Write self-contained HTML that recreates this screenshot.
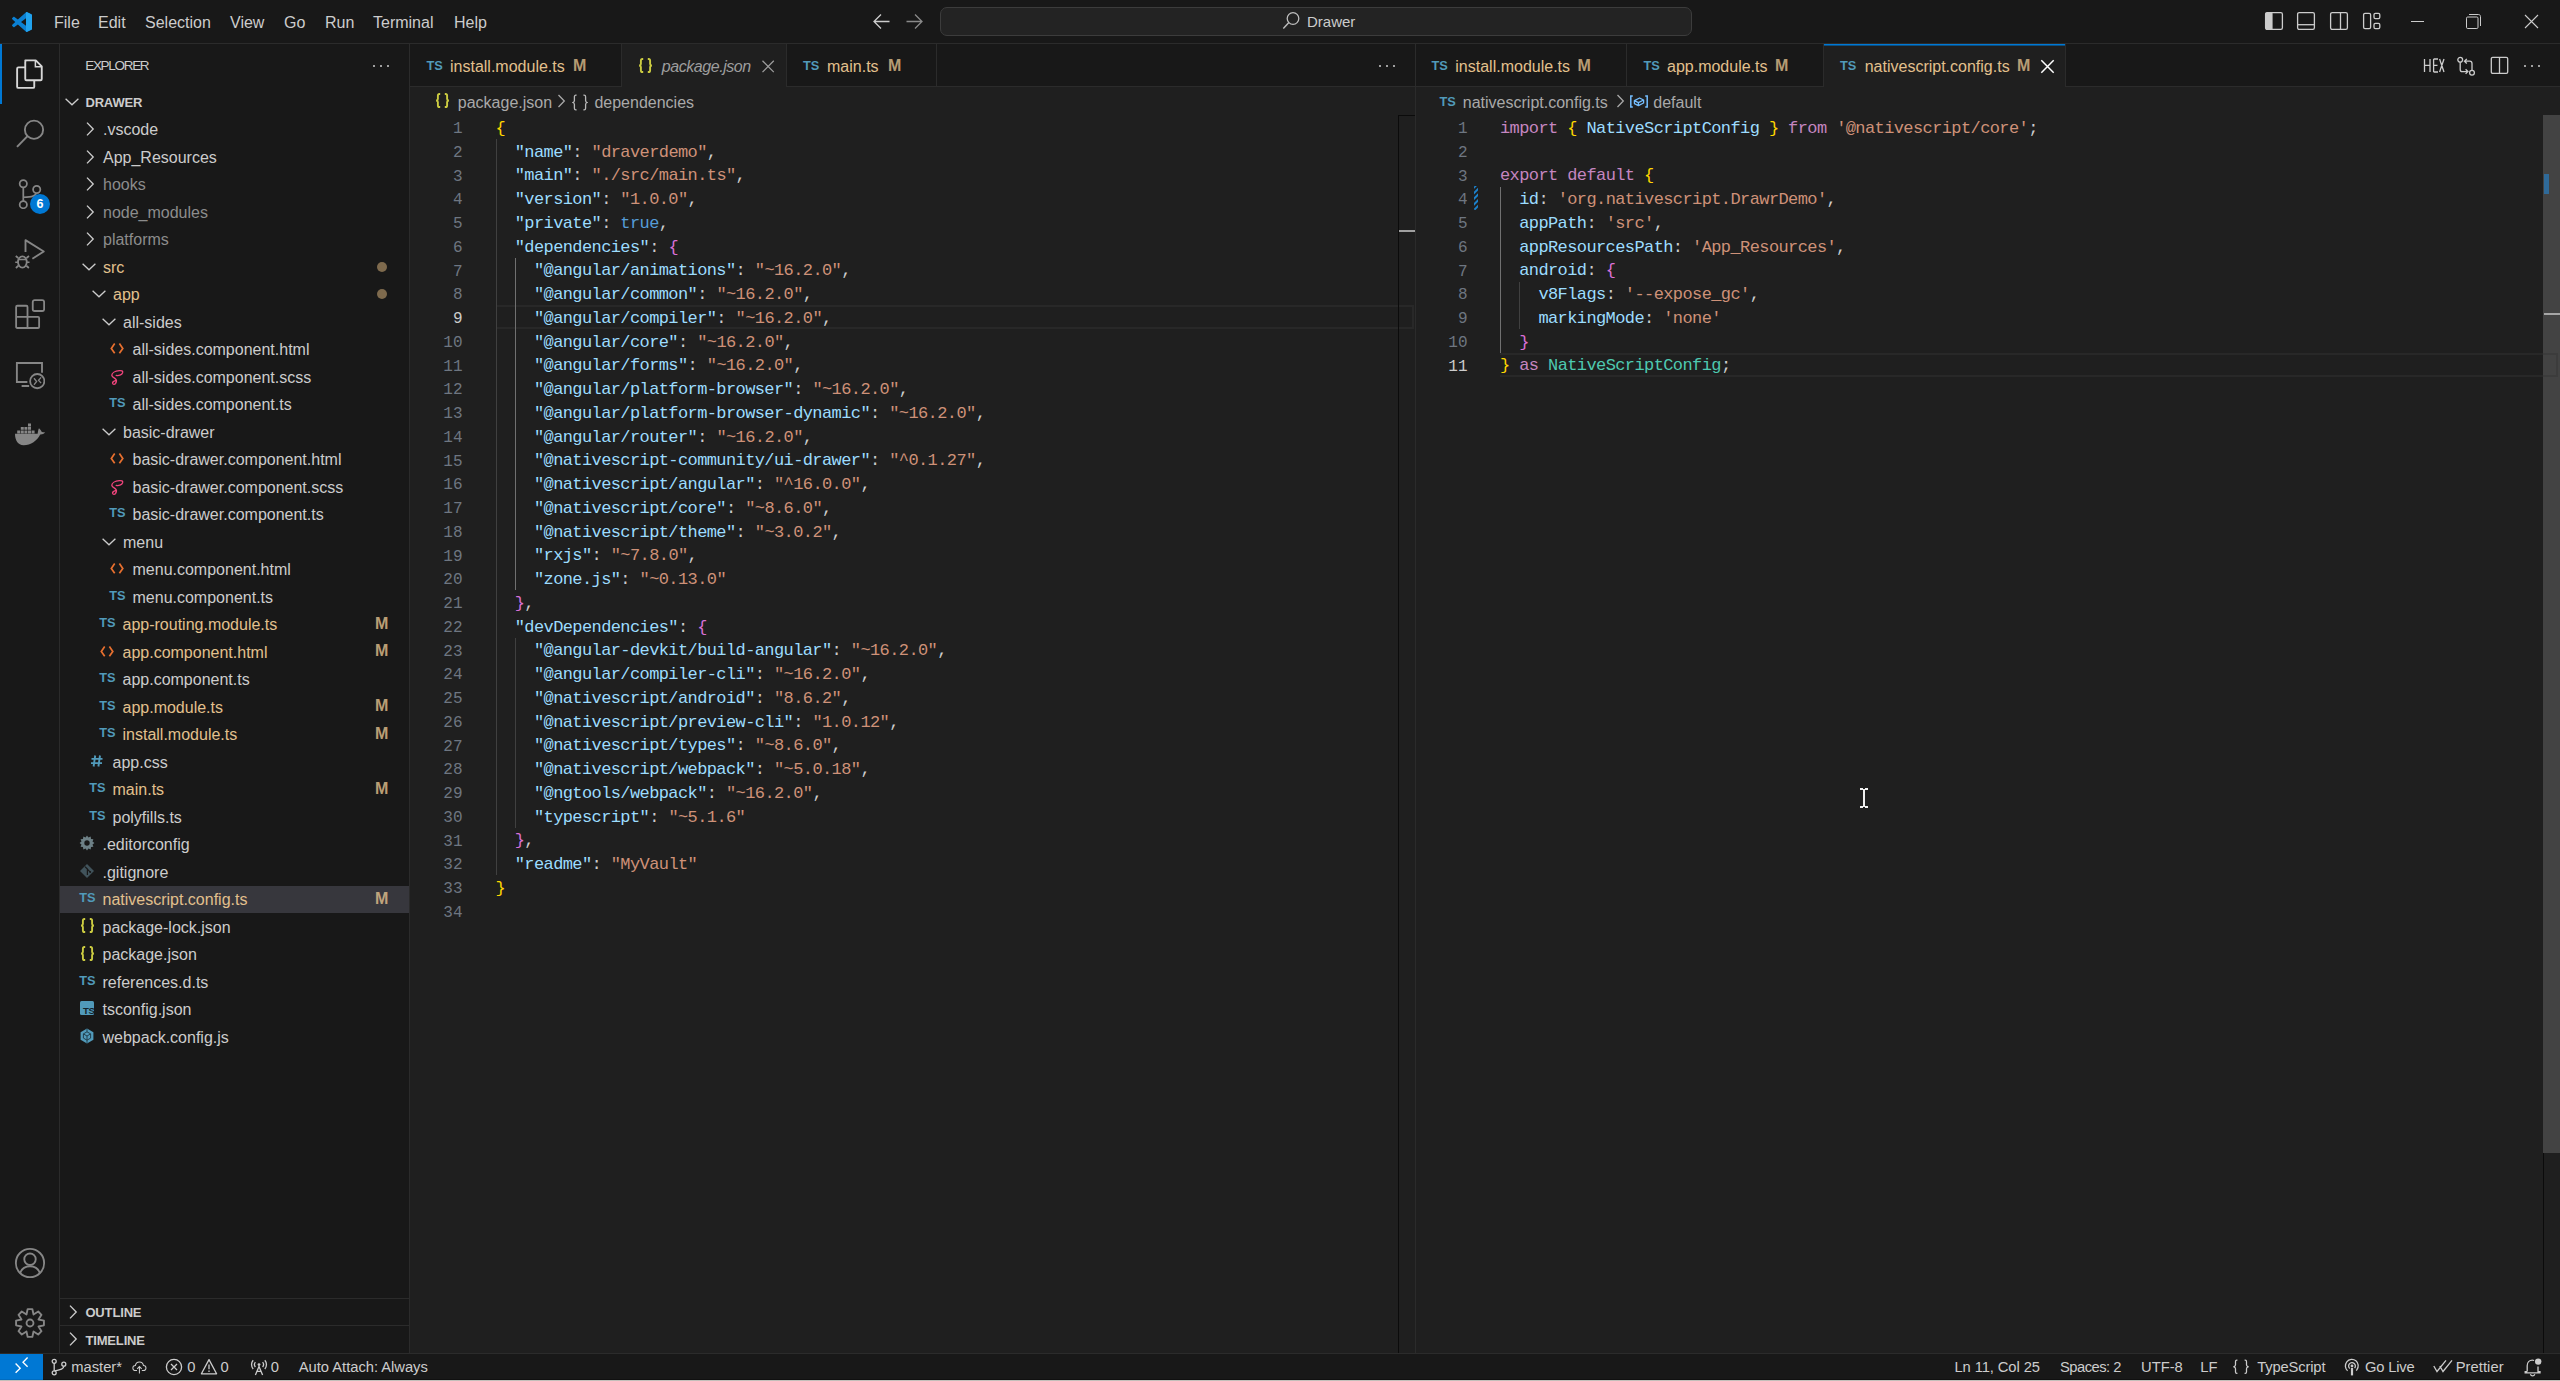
<!DOCTYPE html><html><head><meta charset="utf-8"><title>VS Code</title><style>html,body{margin:0;padding:0;}body{width:2560px;height:1381px;overflow:hidden;position:relative;background:#181818;font-family:"Liberation Sans",sans-serif;}</style></head><body>
<div style="position:absolute;left:0px;top:0px;width:2560px;height:43px;background:#181818;"></div>
<div style="position:absolute;left:0px;top:43px;width:2560px;height:1px;background:#2b2b2b;"></div>
<svg style="position:absolute;left:12px;top:12px;" width="20" height="20" viewBox="0 0 100 100" fill="none"><path d="M96.5 10.8 75.9 0.9c-2.4-1.2-5.2-0.7-7.1 1.2L29.4 38.1 12.2 25.1c-1.6-1.2-3.8-1.1-5.3 0.2L1.4 30.3c-1.8 1.7-1.8 4.5 0 6.2L16.3 50 1.4 63.5c-1.8 1.7-1.8 4.5 0 6.2l5.5 5c1.5 1.4 3.7 1.5 5.3 0.2l17.2-13L68.8 98c1.9 1.9 4.7 2.4 7.1 1.2l20.6-9.9c2.2-1 3.5-3.2 3.5-5.6V16.4c0-2.4-1.4-4.6-3.5-5.6zM75 72.7 45.1 50 75 27.3z" fill="#0b80d3"/><path d="M70 1.5 75.9 0.9 96.5 10.8C98.6 11.8 100 14 100 16.4V83.6C100 86 98.6 88.2 96.5 89.2L75.9 99.1C74 100 72 100 70 99Z" fill="#21a3ee"/></svg>
<div style="position:absolute;left:54px;top:13.52px;font:normal normal 16px/16px 'Liberation Sans', sans-serif;color:#cccccc;white-space:pre;letter-spacing:0px;"><span style="display:inline-block;line-height:normal;vertical-align:baseline">File</span></div>
<div style="position:absolute;left:98px;top:13.52px;font:normal normal 16px/16px 'Liberation Sans', sans-serif;color:#cccccc;white-space:pre;letter-spacing:0px;"><span style="display:inline-block;line-height:normal;vertical-align:baseline">Edit</span></div>
<div style="position:absolute;left:145px;top:13.52px;font:normal normal 16px/16px 'Liberation Sans', sans-serif;color:#cccccc;white-space:pre;letter-spacing:0px;"><span style="display:inline-block;line-height:normal;vertical-align:baseline">Selection</span></div>
<div style="position:absolute;left:230px;top:13.52px;font:normal normal 16px/16px 'Liberation Sans', sans-serif;color:#cccccc;white-space:pre;letter-spacing:0px;"><span style="display:inline-block;line-height:normal;vertical-align:baseline">View</span></div>
<div style="position:absolute;left:284px;top:13.52px;font:normal normal 16px/16px 'Liberation Sans', sans-serif;color:#cccccc;white-space:pre;letter-spacing:0px;"><span style="display:inline-block;line-height:normal;vertical-align:baseline">Go</span></div>
<div style="position:absolute;left:325px;top:13.52px;font:normal normal 16px/16px 'Liberation Sans', sans-serif;color:#cccccc;white-space:pre;letter-spacing:0px;"><span style="display:inline-block;line-height:normal;vertical-align:baseline">Run</span></div>
<div style="position:absolute;left:373px;top:13.52px;font:normal normal 16px/16px 'Liberation Sans', sans-serif;color:#cccccc;white-space:pre;letter-spacing:0px;"><span style="display:inline-block;line-height:normal;vertical-align:baseline">Terminal</span></div>
<div style="position:absolute;left:454px;top:13.52px;font:normal normal 16px/16px 'Liberation Sans', sans-serif;color:#cccccc;white-space:pre;letter-spacing:0px;"><span style="display:inline-block;line-height:normal;vertical-align:baseline">Help</span></div>
<svg style="position:absolute;left:872px;top:13px;" width="19" height="17" viewBox="0 0 19 17" fill="none"><path d="M9 1.5 2 8.5 9 15.5M2 8.5H17.5" stroke="#cccccc" stroke-width="1.3"/></svg>
<svg style="position:absolute;left:905px;top:13px;" width="19" height="17" viewBox="0 0 19 17" fill="none"><path d="M10 1.5 17 8.5 10 15.5M17 8.5H1.5" stroke="#8a8a8a" stroke-width="1.3"/></svg>
<div style="position:absolute;left:940px;top:7px;width:750px;height:27px;border:1.25px solid #3c3c3c;border-radius:7px;background:#232323;"></div>
<svg style="position:absolute;left:1282px;top:11px;" width="19" height="19" viewBox="0 0 19 19" fill="none"><circle cx="11" cy="7.5" r="5.8" stroke="#bdbdbd" stroke-width="1.3"/><path d="M6.9 11.6 1.3 17.4" stroke="#bdbdbd" stroke-width="1.4"/></svg>
<div style="position:absolute;left:1307px;top:13.42px;font:normal normal 15px/15px 'Liberation Sans', sans-serif;color:#cccccc;white-space:pre;letter-spacing:0px;"><span style="display:inline-block;line-height:normal;vertical-align:baseline">Drawer</span></div>
<svg style="position:absolute;left:2264px;top:11px;" width="20" height="20" viewBox="0 0 20 20" fill="none"><rect x="1.6" y="1.6" width="16.8" height="16.8" rx="1.6" stroke="#cccccc" stroke-width="1.3"/><rect x="1.6" y="1.6" width="7" height="16.8" rx="1.2" fill="#cccccc"/></svg>
<svg style="position:absolute;left:2296px;top:11px;" width="20" height="20" viewBox="0 0 20 20" fill="none"><rect x="1.6" y="1.6" width="16.8" height="16.8" rx="1.6" stroke="#cccccc" stroke-width="1.3"/><path d="M1.6 13.7H18.4" stroke="#cccccc" stroke-width="1.3"/></svg>
<svg style="position:absolute;left:2329px;top:11px;" width="20" height="20" viewBox="0 0 20 20" fill="none"><rect x="1.6" y="1.6" width="16.8" height="16.8" rx="1.6" stroke="#cccccc" stroke-width="1.3"/><path d="M11.5 1.6V18.4" stroke="#cccccc" stroke-width="1.3"/></svg>
<svg style="position:absolute;left:2362px;top:11px;" width="20" height="20" viewBox="0 0 20 20" fill="none"><rect x="1.6" y="2.3" width="7" height="15.4" rx="1.4" stroke="#cccccc" stroke-width="1.3"/><rect x="12" y="2.3" width="5.8" height="5.4" rx="1.4" stroke="#cccccc" stroke-width="1.3"/><rect x="12" y="12.3" width="5.8" height="5.4" rx="1.4" stroke="#cccccc" stroke-width="1.3"/></svg>
<div style="position:absolute;left:2411px;top:21px;width:13px;height:1px;background:#cccccc;"></div>
<svg style="position:absolute;left:2465px;top:13px;" width="17" height="17" viewBox="0 0 17 17" fill="none"><rect x="1.5" y="4" width="11.5" height="11.5" rx="1.2" stroke="#cccccc" stroke-width="1"/><path d="M4 1.5H13.5C14.6 1.5 15.5 2.4 15.5 3.5V13" stroke="#cccccc" stroke-width="1"/></svg>
<svg style="position:absolute;left:2523px;top:14px;" width="17" height="16" viewBox="0 0 17 16" fill="none"><path d="M2 1 15 14M15 1 2 14" stroke="#cccccc" stroke-width="1.1"/></svg>
<div style="position:absolute;left:0px;top:44px;width:59px;height:1309px;background:#181818;"></div>
<div style="position:absolute;left:59px;top:44px;width:1px;height:1309px;background:#2b2b2b;"></div>
<div style="position:absolute;left:0px;top:44px;width:2px;height:60px;background:#0078d4;"></div>
<svg style="position:absolute;left:15px;top:59px;" width="30" height="30" viewBox="0 0 24 24" fill="none"><path d="M8.2 1.1H16.6L21.4 5.9V16Q21.4 17 20.4 17H9.2Q8.2 17 8.2 16V2.1Q8.2 1.1 9.2 1.1Z" stroke="#d7d7d7" stroke-width="1.5" stroke-linejoin="round"/><path d="M16.3 1.3V6.2H21.2" stroke="#d7d7d7" stroke-width="1.2"/><path d="M8.2 6.7H2.7Q1.7 6.7 1.7 7.7V22.1Q1.7 23.1 2.7 23.1H14.4Q15.4 23.1 15.4 22.1V17" stroke="#d7d7d7" stroke-width="1.5"/></svg>
<svg style="position:absolute;left:15px;top:119px;" width="30" height="30" viewBox="0 0 24 24" fill="none"><circle cx="15.2" cy="8.6" r="7.3" stroke="#868686" stroke-width="1.5"/><path d="M10 13.7 1.6 22.3" stroke="#868686" stroke-width="1.6"/></svg>
<svg style="position:absolute;left:15px;top:179px;" width="30" height="30" viewBox="0 0 24 24" fill="none"><circle cx="6.64" cy="3.76" r="2.9" stroke="#868686" stroke-width="1.4"/><circle cx="6.64" cy="20.5" r="2.9" stroke="#868686" stroke-width="1.4"/><circle cx="17.36" cy="8.4" r="2.9" stroke="#868686" stroke-width="1.4"/><path d="M6.64 6.66V17.6M17.1 11.3C16.2 13.6 14.2 14.4 6.8 14.6" stroke="#868686" stroke-width="1.4"/></svg>
<div style="position:absolute;left:30px;top:194px;width:20px;height:20px;border-radius:10px;background:#0078d4;color:#fff;font:bold 12.5px/20px 'Liberation Sans',sans-serif;text-align:center;">6</div>
<svg style="position:absolute;left:15px;top:239px;" width="30" height="30" viewBox="0 0 24 24" fill="none"><path d="M8.4 10.4V0.9L23 10 13.9 15.8" stroke="#868686" stroke-width="1.5" stroke-linejoin="round"/><ellipse cx="5.9" cy="18.4" rx="3.5" ry="4.5" stroke="#868686" stroke-width="1.45"/><path d="M2.5 16.4H9.3M2.6 15.2 0.6 13.6M9.2 15.2 11.2 13.6M2.3 18.6H0.2M9.5 18.6H11.6M2.7 21.4 0.7 23.2M9.1 21.4 11.1 23.2" stroke="#868686" stroke-width="1.35"/></svg>
<svg style="position:absolute;left:15px;top:299px;" width="30" height="30" viewBox="0 0 24 24" fill="none"><path d="M0.9 6.3Q0.9 5.4 1.8 5.4H9.1Q10 5.4 10 6.3V14.3H18.4Q19.3 14.3 19.3 15.2V22.3Q19.3 23.2 18.4 23.2H1.8Q0.9 23.2 0.9 22.3Z M0.9 14.3H10V23.2" stroke="#868686" stroke-width="1.45"/><rect x="14.2" y="0.9" width="9.1" height="8.7" rx="1.5" stroke="#868686" stroke-width="1.45"/></svg>
<svg style="position:absolute;left:15px;top:360px;" width="30" height="30" viewBox="0 0 24 24" fill="none"><path d="M21.6 10.2V2.4H1.5V17.6H9.9M5.3 20.8H11.3" stroke="#868686" stroke-width="1.5"/><circle cx="17.8" cy="16.9" r="5.7" stroke="#868686" stroke-width="1.45"/><path d="M15.2 14.6 17.3 17.2 15.2 19.8M20.9 13.9 18.8 16.2 20.9 18.5" stroke="#868686" stroke-width="1.05"/></svg>
<svg style="position:absolute;left:14px;top:420px;" width="32" height="28" viewBox="0 0 32 28" fill="none"><path d="M1 13.8H23.6C24 11.5 24.2 9.4 25 8.2C26.4 9.4 27.4 11 27.8 12L31.2 12.6C29.8 14 27.8 14.6 26.2 14.4C23.4 20.5 16.5 25.3 9.5 25.2C4 25.1 1 20.5 1 13.8Z" fill="#868686"/><path d="M3.2 10.6h3v2.8h-3zM6.8 10.6h3v2.8h-3zM10.4 10.6h3v2.8h-3zM14.0 10.6h3v2.8h-3zM17.6 10.6h3v2.8h-3zM6.8 7.0h3v2.8h-3zM10.4 7.0h3v2.8h-3zM14.0 7.0h3v2.8h-3zM14.0 3.6h3v2.8h-3z" fill="#868686"/></svg>
<svg style="position:absolute;left:14px;top:1247px;" width="32" height="32" viewBox="0 0 24 24" fill="none"><circle cx="12" cy="12" r="10.6" stroke="#868686" stroke-width="1.4"/><circle cx="12" cy="9.2" r="4.3" stroke="#868686" stroke-width="1.4"/><path d="M4.6 19.6 C5.8 16 8.4 14.4 12 14.4 C15.6 14.4 18.2 16 19.4 19.6" stroke="#868686" stroke-width="1.4"/></svg>
<svg style="position:absolute;left:14px;top:1307px;" width="32" height="32" viewBox="0 0 24 24" fill="none"><path d="M10.25 1.55 L13.75 1.55 L14.64 5.63 L18.16 3.37 L20.63 5.84 L18.37 9.36 L22.45 10.25 L22.45 13.75 L18.37 14.64 L20.63 18.16 L18.16 20.63 L14.64 18.37 L13.75 22.45 L10.25 22.45 L9.36 18.37 L5.84 20.63 L3.37 18.16 L5.63 14.64 L1.55 13.75 L1.55 10.25 L5.63 9.36 L3.37 5.84 L5.84 3.37 L9.36 5.63Z" stroke="#868686" stroke-width="1.4" stroke-linejoin="round"/><circle cx="12" cy="12" r="2.6" stroke="#868686" stroke-width="1.4"/></svg>
<div style="position:absolute;left:60px;top:44px;width:349px;height:1309px;background:#181818;"></div>
<div style="position:absolute;left:409px;top:44px;width:1px;height:1309px;background:#2b2b2b;"></div>
<div style="position:absolute;left:85.2px;top:58.18px;font:normal normal 13.5px/13.5px 'Liberation Sans', sans-serif;color:#cccccc;white-space:pre;letter-spacing:-1.3px;"><span style="display:inline-block;line-height:normal;vertical-align:baseline">EXPLORER</span></div>
<div style="position:absolute;left:373.2px;top:64.8px;width:2.3px;height:2.3px;background:#cccccc;border-radius:1.15px"></div>
<div style="position:absolute;left:380px;top:64.8px;width:2.3px;height:2.3px;background:#cccccc;border-radius:1.15px"></div>
<div style="position:absolute;left:386.8px;top:64.8px;width:2.3px;height:2.3px;background:#cccccc;border-radius:1.15px"></div>
<svg style="position:absolute;left:62.400000000000006px;top:91.5px;" width="20" height="20" viewBox="0 0 20 20" fill="none"><path d="M3.6 6.7 10 12.8 16.4 6.7" stroke="#cccccc" stroke-width="1.3"/></svg>
<div style="position:absolute;left:85.4px;top:95.44px;font:normal bold 13px/13px 'Liberation Sans', sans-serif;color:#cccccc;white-space:pre;letter-spacing:-0.15px;"><span style="display:inline-block;line-height:normal;vertical-align:baseline">DRAWER</span></div>
<svg style="position:absolute;left:79.5px;top:119.25px;" width="20" height="20" viewBox="0 0 20 20" fill="none"><path d="M7 3.6 13.2 10 7 16.4" stroke="#cccccc" stroke-width="1.35"/></svg>
<div style="position:absolute;left:103px;top:121.37px;font:normal normal 16px/16px 'Liberation Sans', sans-serif;color:#cccccc;white-space:pre;letter-spacing:0px;"><span style="display:inline-block;line-height:normal;vertical-align:baseline">.vscode</span></div>
<svg style="position:absolute;left:79.5px;top:146.75px;" width="20" height="20" viewBox="0 0 20 20" fill="none"><path d="M7 3.6 13.2 10 7 16.4" stroke="#cccccc" stroke-width="1.35"/></svg>
<div style="position:absolute;left:103px;top:148.87px;font:normal normal 16px/16px 'Liberation Sans', sans-serif;color:#cccccc;white-space:pre;letter-spacing:0px;"><span style="display:inline-block;line-height:normal;vertical-align:baseline">App_Resources</span></div>
<svg style="position:absolute;left:79.5px;top:174.25px;" width="20" height="20" viewBox="0 0 20 20" fill="none"><path d="M7 3.6 13.2 10 7 16.4" stroke="#cccccc" stroke-width="1.35"/></svg>
<div style="position:absolute;left:103px;top:176.37px;font:normal normal 16px/16px 'Liberation Sans', sans-serif;color:#8c8c8c;white-space:pre;letter-spacing:0px;"><span style="display:inline-block;line-height:normal;vertical-align:baseline">hooks</span></div>
<svg style="position:absolute;left:79.5px;top:201.75px;" width="20" height="20" viewBox="0 0 20 20" fill="none"><path d="M7 3.6 13.2 10 7 16.4" stroke="#cccccc" stroke-width="1.35"/></svg>
<div style="position:absolute;left:103px;top:203.87px;font:normal normal 16px/16px 'Liberation Sans', sans-serif;color:#8c8c8c;white-space:pre;letter-spacing:0px;"><span style="display:inline-block;line-height:normal;vertical-align:baseline">node_modules</span></div>
<svg style="position:absolute;left:79.5px;top:229.25px;" width="20" height="20" viewBox="0 0 20 20" fill="none"><path d="M7 3.6 13.2 10 7 16.4" stroke="#cccccc" stroke-width="1.35"/></svg>
<div style="position:absolute;left:103px;top:231.37px;font:normal normal 16px/16px 'Liberation Sans', sans-serif;color:#8c8c8c;white-space:pre;letter-spacing:0px;"><span style="display:inline-block;line-height:normal;vertical-align:baseline">platforms</span></div>
<svg style="position:absolute;left:78.6px;top:256.75px;" width="20" height="20" viewBox="0 0 20 20" fill="none"><path d="M3.6 6.7 10 12.8 16.4 6.7" stroke="#cccccc" stroke-width="1.3"/></svg>
<div style="position:absolute;left:103px;top:258.87px;font:normal normal 16px/16px 'Liberation Sans', sans-serif;color:#e2c08d;white-space:pre;letter-spacing:0px;"><span style="display:inline-block;line-height:normal;vertical-align:baseline">src</span></div>
<div style="position:absolute;left:377px;top:261.75px;width:10px;height:10px;background:#7e6a4d;border-radius:5px"></div>
<svg style="position:absolute;left:88.6px;top:284.25px;" width="20" height="20" viewBox="0 0 20 20" fill="none"><path d="M3.6 6.7 10 12.8 16.4 6.7" stroke="#cccccc" stroke-width="1.3"/></svg>
<div style="position:absolute;left:113px;top:286.37px;font:normal normal 16px/16px 'Liberation Sans', sans-serif;color:#e2c08d;white-space:pre;letter-spacing:0px;"><span style="display:inline-block;line-height:normal;vertical-align:baseline">app</span></div>
<div style="position:absolute;left:377px;top:289.25px;width:10px;height:10px;background:#7e6a4d;border-radius:5px"></div>
<svg style="position:absolute;left:98.6px;top:311.75px;" width="20" height="20" viewBox="0 0 20 20" fill="none"><path d="M3.6 6.7 10 12.8 16.4 6.7" stroke="#cccccc" stroke-width="1.3"/></svg>
<div style="position:absolute;left:123px;top:313.87px;font:normal normal 16px/16px 'Liberation Sans', sans-serif;color:#cccccc;white-space:pre;letter-spacing:0px;"><span style="display:inline-block;line-height:normal;vertical-align:baseline">all-sides</span></div>
<svg style="position:absolute;left:109px;top:341.25px;" width="16" height="16" viewBox="0 0 16 16" fill="none"><path d="M5.7 2.6 2.3 7.4 5.7 12.2M10.4 2.6 13.8 7.4 10.4 12.2" stroke="#e8702f" stroke-width="1.7"/></svg>
<div style="position:absolute;left:132.5px;top:341.37px;font:normal normal 16px/16px 'Liberation Sans', sans-serif;color:#cccccc;white-space:pre;letter-spacing:0px;"><span style="display:inline-block;line-height:normal;vertical-align:baseline">all-sides.component.html</span></div>
<svg style="position:absolute;left:109px;top:368.75px;" width="16" height="16" viewBox="0 0 16 16" fill="none"><path d="M7.2 6.4C9.5 7 12.8 6 13.6 3.8C14.2 2 12.5 1.4 10.4 1.6C6 2 2.8 4 2.8 6.2C2.8 8 5.5 9 6.6 9.9C7.8 11 7.4 13 6.6 14.4C5.8 15.6 3.9 15.6 3.6 14.4C3.3 13 4.8 12 7 11.4" stroke="#f0457c" stroke-width="1.35" stroke-linecap="round"/></svg>
<div style="position:absolute;left:132.5px;top:368.87px;font:normal normal 16px/16px 'Liberation Sans', sans-serif;color:#cccccc;white-space:pre;letter-spacing:0px;"><span style="display:inline-block;line-height:normal;vertical-align:baseline">all-sides.component.scss</span></div>
<div style="position:absolute;left:109.2px;top:395.17px;font:normal bold 12.8px/12.8px 'Liberation Sans', sans-serif;color:#519aba;white-space:pre;letter-spacing:-0.1px;"><span style="display:inline-block;line-height:normal;vertical-align:baseline">TS</span></div>
<div style="position:absolute;left:132.5px;top:396.37px;font:normal normal 16px/16px 'Liberation Sans', sans-serif;color:#cccccc;white-space:pre;letter-spacing:0px;"><span style="display:inline-block;line-height:normal;vertical-align:baseline">all-sides.component.ts</span></div>
<svg style="position:absolute;left:98.6px;top:421.75px;" width="20" height="20" viewBox="0 0 20 20" fill="none"><path d="M3.6 6.7 10 12.8 16.4 6.7" stroke="#cccccc" stroke-width="1.3"/></svg>
<div style="position:absolute;left:123px;top:423.87px;font:normal normal 16px/16px 'Liberation Sans', sans-serif;color:#cccccc;white-space:pre;letter-spacing:0px;"><span style="display:inline-block;line-height:normal;vertical-align:baseline">basic-drawer</span></div>
<svg style="position:absolute;left:109px;top:451.25px;" width="16" height="16" viewBox="0 0 16 16" fill="none"><path d="M5.7 2.6 2.3 7.4 5.7 12.2M10.4 2.6 13.8 7.4 10.4 12.2" stroke="#e8702f" stroke-width="1.7"/></svg>
<div style="position:absolute;left:132.5px;top:451.37px;font:normal normal 16px/16px 'Liberation Sans', sans-serif;color:#cccccc;white-space:pre;letter-spacing:0px;"><span style="display:inline-block;line-height:normal;vertical-align:baseline">basic-drawer.component.html</span></div>
<svg style="position:absolute;left:109px;top:478.75px;" width="16" height="16" viewBox="0 0 16 16" fill="none"><path d="M7.2 6.4C9.5 7 12.8 6 13.6 3.8C14.2 2 12.5 1.4 10.4 1.6C6 2 2.8 4 2.8 6.2C2.8 8 5.5 9 6.6 9.9C7.8 11 7.4 13 6.6 14.4C5.8 15.6 3.9 15.6 3.6 14.4C3.3 13 4.8 12 7 11.4" stroke="#f0457c" stroke-width="1.35" stroke-linecap="round"/></svg>
<div style="position:absolute;left:132.5px;top:478.87px;font:normal normal 16px/16px 'Liberation Sans', sans-serif;color:#cccccc;white-space:pre;letter-spacing:0px;"><span style="display:inline-block;line-height:normal;vertical-align:baseline">basic-drawer.component.scss</span></div>
<div style="position:absolute;left:109.2px;top:505.17px;font:normal bold 12.8px/12.8px 'Liberation Sans', sans-serif;color:#519aba;white-space:pre;letter-spacing:-0.1px;"><span style="display:inline-block;line-height:normal;vertical-align:baseline">TS</span></div>
<div style="position:absolute;left:132.5px;top:506.37px;font:normal normal 16px/16px 'Liberation Sans', sans-serif;color:#cccccc;white-space:pre;letter-spacing:0px;"><span style="display:inline-block;line-height:normal;vertical-align:baseline">basic-drawer.component.ts</span></div>
<svg style="position:absolute;left:98.6px;top:531.75px;" width="20" height="20" viewBox="0 0 20 20" fill="none"><path d="M3.6 6.7 10 12.8 16.4 6.7" stroke="#cccccc" stroke-width="1.3"/></svg>
<div style="position:absolute;left:123px;top:533.87px;font:normal normal 16px/16px 'Liberation Sans', sans-serif;color:#cccccc;white-space:pre;letter-spacing:0px;"><span style="display:inline-block;line-height:normal;vertical-align:baseline">menu</span></div>
<svg style="position:absolute;left:109px;top:561.25px;" width="16" height="16" viewBox="0 0 16 16" fill="none"><path d="M5.7 2.6 2.3 7.4 5.7 12.2M10.4 2.6 13.8 7.4 10.4 12.2" stroke="#e8702f" stroke-width="1.7"/></svg>
<div style="position:absolute;left:132.5px;top:561.37px;font:normal normal 16px/16px 'Liberation Sans', sans-serif;color:#cccccc;white-space:pre;letter-spacing:0px;"><span style="display:inline-block;line-height:normal;vertical-align:baseline">menu.component.html</span></div>
<div style="position:absolute;left:109.2px;top:587.67px;font:normal bold 12.8px/12.8px 'Liberation Sans', sans-serif;color:#519aba;white-space:pre;letter-spacing:-0.1px;"><span style="display:inline-block;line-height:normal;vertical-align:baseline">TS</span></div>
<div style="position:absolute;left:132.5px;top:588.87px;font:normal normal 16px/16px 'Liberation Sans', sans-serif;color:#cccccc;white-space:pre;letter-spacing:0px;"><span style="display:inline-block;line-height:normal;vertical-align:baseline">menu.component.ts</span></div>
<div style="position:absolute;left:99.2px;top:615.17px;font:normal bold 12.8px/12.8px 'Liberation Sans', sans-serif;color:#519aba;white-space:pre;letter-spacing:-0.1px;"><span style="display:inline-block;line-height:normal;vertical-align:baseline">TS</span></div>
<div style="position:absolute;left:122.5px;top:616.37px;font:normal normal 16px/16px 'Liberation Sans', sans-serif;color:#e2c08d;white-space:pre;letter-spacing:0px;"><span style="display:inline-block;line-height:normal;vertical-align:baseline">app-routing.module.ts</span></div>
<div style="position:absolute;left:375px;top:614.67px;font:normal bold 16px/16px 'Liberation Sans', sans-serif;color:#e2c08d;white-space:pre;letter-spacing:0px;opacity:0.8"><span style="display:inline-block;line-height:normal;vertical-align:baseline">M</span></div>
<svg style="position:absolute;left:99px;top:643.75px;" width="16" height="16" viewBox="0 0 16 16" fill="none"><path d="M5.7 2.6 2.3 7.4 5.7 12.2M10.4 2.6 13.8 7.4 10.4 12.2" stroke="#e8702f" stroke-width="1.7"/></svg>
<div style="position:absolute;left:122.5px;top:643.87px;font:normal normal 16px/16px 'Liberation Sans', sans-serif;color:#e2c08d;white-space:pre;letter-spacing:0px;"><span style="display:inline-block;line-height:normal;vertical-align:baseline">app.component.html</span></div>
<div style="position:absolute;left:375px;top:642.17px;font:normal bold 16px/16px 'Liberation Sans', sans-serif;color:#e2c08d;white-space:pre;letter-spacing:0px;opacity:0.8"><span style="display:inline-block;line-height:normal;vertical-align:baseline">M</span></div>
<div style="position:absolute;left:99.2px;top:670.17px;font:normal bold 12.8px/12.8px 'Liberation Sans', sans-serif;color:#519aba;white-space:pre;letter-spacing:-0.1px;"><span style="display:inline-block;line-height:normal;vertical-align:baseline">TS</span></div>
<div style="position:absolute;left:122.5px;top:671.37px;font:normal normal 16px/16px 'Liberation Sans', sans-serif;color:#cccccc;white-space:pre;letter-spacing:0px;"><span style="display:inline-block;line-height:normal;vertical-align:baseline">app.component.ts</span></div>
<div style="position:absolute;left:99.2px;top:697.67px;font:normal bold 12.8px/12.8px 'Liberation Sans', sans-serif;color:#519aba;white-space:pre;letter-spacing:-0.1px;"><span style="display:inline-block;line-height:normal;vertical-align:baseline">TS</span></div>
<div style="position:absolute;left:122.5px;top:698.87px;font:normal normal 16px/16px 'Liberation Sans', sans-serif;color:#e2c08d;white-space:pre;letter-spacing:0px;"><span style="display:inline-block;line-height:normal;vertical-align:baseline">app.module.ts</span></div>
<div style="position:absolute;left:375px;top:697.17px;font:normal bold 16px/16px 'Liberation Sans', sans-serif;color:#e2c08d;white-space:pre;letter-spacing:0px;opacity:0.8"><span style="display:inline-block;line-height:normal;vertical-align:baseline">M</span></div>
<div style="position:absolute;left:99.2px;top:725.17px;font:normal bold 12.8px/12.8px 'Liberation Sans', sans-serif;color:#519aba;white-space:pre;letter-spacing:-0.1px;"><span style="display:inline-block;line-height:normal;vertical-align:baseline">TS</span></div>
<div style="position:absolute;left:122.5px;top:726.37px;font:normal normal 16px/16px 'Liberation Sans', sans-serif;color:#e2c08d;white-space:pre;letter-spacing:0px;"><span style="display:inline-block;line-height:normal;vertical-align:baseline">install.module.ts</span></div>
<div style="position:absolute;left:375px;top:724.67px;font:normal bold 16px/16px 'Liberation Sans', sans-serif;color:#e2c08d;white-space:pre;letter-spacing:0px;opacity:0.8"><span style="display:inline-block;line-height:normal;vertical-align:baseline">M</span></div>
<svg style="position:absolute;left:90px;top:753.75px;" width="14" height="14" viewBox="0 0 14 14" fill="none"><path d="M5.2 1.5 3.6 12.5M10 1.5 8.4 12.5M1.5 4.9H12.5M1 9.1H12" stroke="#519aba" stroke-width="1.9"/></svg>
<div style="position:absolute;left:112.5px;top:753.87px;font:normal normal 16px/16px 'Liberation Sans', sans-serif;color:#cccccc;white-space:pre;letter-spacing:0px;"><span style="display:inline-block;line-height:normal;vertical-align:baseline">app.css</span></div>
<div style="position:absolute;left:89.2px;top:780.17px;font:normal bold 12.8px/12.8px 'Liberation Sans', sans-serif;color:#519aba;white-space:pre;letter-spacing:-0.1px;"><span style="display:inline-block;line-height:normal;vertical-align:baseline">TS</span></div>
<div style="position:absolute;left:112.5px;top:781.37px;font:normal normal 16px/16px 'Liberation Sans', sans-serif;color:#e2c08d;white-space:pre;letter-spacing:0px;"><span style="display:inline-block;line-height:normal;vertical-align:baseline">main.ts</span></div>
<div style="position:absolute;left:375px;top:779.67px;font:normal bold 16px/16px 'Liberation Sans', sans-serif;color:#e2c08d;white-space:pre;letter-spacing:0px;opacity:0.8"><span style="display:inline-block;line-height:normal;vertical-align:baseline">M</span></div>
<div style="position:absolute;left:89.2px;top:807.67px;font:normal bold 12.8px/12.8px 'Liberation Sans', sans-serif;color:#519aba;white-space:pre;letter-spacing:-0.1px;"><span style="display:inline-block;line-height:normal;vertical-align:baseline">TS</span></div>
<div style="position:absolute;left:112.5px;top:808.87px;font:normal normal 16px/16px 'Liberation Sans', sans-serif;color:#cccccc;white-space:pre;letter-spacing:0px;"><span style="display:inline-block;line-height:normal;vertical-align:baseline">polyfills.ts</span></div>
<svg style="position:absolute;left:79px;top:834.95px;" width="16" height="16" viewBox="0 0 16 16" fill="none"><path d="M8 0.6 9.4 2.5 11.7 1.6 12 4 14.4 4.3 13.5 6.6 15.4 8 13.5 9.4 14.4 11.7 12 12 11.7 14.4 9.4 13.5 8 15.4 6.6 13.5 4.3 14.4 4 12 1.6 11.7 2.5 9.4 0.6 8 2.5 6.6 1.6 4.3 4 4 4.3 1.6 6.6 2.5Z" fill="#6d8086"/><circle cx="8" cy="8" r="2.7" fill="#181818"/></svg>
<div style="position:absolute;left:102.5px;top:836.37px;font:normal normal 16px/16px 'Liberation Sans', sans-serif;color:#cccccc;white-space:pre;letter-spacing:0px;"><span style="display:inline-block;line-height:normal;vertical-align:baseline">.editorconfig</span></div>
<svg style="position:absolute;left:79px;top:862.75px;" width="16" height="16" viewBox="0 0 16 16" fill="none"><path d="M8 1 15 8 8 15 1 8Z" fill="#41535b"/><path d="M6 3.6 8.4 6V12M8.6 6.4 11 8.8" stroke="#181818" stroke-width="1.2"/><circle cx="11.2" cy="9" r="1" fill="#181818"/></svg>
<div style="position:absolute;left:102.5px;top:863.87px;font:normal normal 16px/16px 'Liberation Sans', sans-serif;color:#cccccc;white-space:pre;letter-spacing:0px;"><span style="display:inline-block;line-height:normal;vertical-align:baseline">.gitignore</span></div>
<div style="position:absolute;left:60px;top:885.5px;width:349px;height:27.5px;background:#37373d;"></div>
<div style="position:absolute;left:79.2px;top:890.17px;font:normal bold 12.8px/12.8px 'Liberation Sans', sans-serif;color:#519aba;white-space:pre;letter-spacing:-0.1px;"><span style="display:inline-block;line-height:normal;vertical-align:baseline">TS</span></div>
<div style="position:absolute;left:102.5px;top:891.37px;font:normal normal 16px/16px 'Liberation Sans', sans-serif;color:#e2c08d;white-space:pre;letter-spacing:0px;"><span style="display:inline-block;line-height:normal;vertical-align:baseline">nativescript.config.ts</span></div>
<div style="position:absolute;left:375px;top:889.67px;font:normal bold 16px/16px 'Liberation Sans', sans-serif;color:#e2c08d;white-space:pre;letter-spacing:0px;opacity:0.8"><span style="display:inline-block;line-height:normal;vertical-align:baseline">M</span></div>
<svg style="position:absolute;left:79.5px;top:918.25px;" width="15" height="15" viewBox="0 0 15 15" fill="none"><path d="M5.2 1H4.4C3.4 1 2.9 1.6 2.9 2.6V5.9C2.9 6.8 2.4 7.3 1.2 7.5 2.4 7.7 2.9 8.2 2.9 9.1V12.4C2.9 13.4 3.4 14 4.4 14H5.2M9.8 1H10.6C11.6 1 12.1 1.6 12.1 2.6V5.9C12.1 6.8 12.6 7.3 13.8 7.5 12.6 7.7 12.1 8.2 12.1 9.1V12.4C12.1 13.4 11.6 14 10.6 14H9.8" stroke="#cbcb41" stroke-width="1.9"/></svg>
<div style="position:absolute;left:102.5px;top:918.87px;font:normal normal 16px/16px 'Liberation Sans', sans-serif;color:#cccccc;white-space:pre;letter-spacing:0px;"><span style="display:inline-block;line-height:normal;vertical-align:baseline">package-lock.json</span></div>
<svg style="position:absolute;left:79.5px;top:945.75px;" width="15" height="15" viewBox="0 0 15 15" fill="none"><path d="M5.2 1H4.4C3.4 1 2.9 1.6 2.9 2.6V5.9C2.9 6.8 2.4 7.3 1.2 7.5 2.4 7.7 2.9 8.2 2.9 9.1V12.4C2.9 13.4 3.4 14 4.4 14H5.2M9.8 1H10.6C11.6 1 12.1 1.6 12.1 2.6V5.9C12.1 6.8 12.6 7.3 13.8 7.5 12.6 7.7 12.1 8.2 12.1 9.1V12.4C12.1 13.4 11.6 14 10.6 14H9.8" stroke="#cbcb41" stroke-width="1.9"/></svg>
<div style="position:absolute;left:102.5px;top:946.37px;font:normal normal 16px/16px 'Liberation Sans', sans-serif;color:#cccccc;white-space:pre;letter-spacing:0px;"><span style="display:inline-block;line-height:normal;vertical-align:baseline">package.json</span></div>
<div style="position:absolute;left:79.2px;top:972.67px;font:normal bold 12.8px/12.8px 'Liberation Sans', sans-serif;color:#519aba;white-space:pre;letter-spacing:-0.1px;"><span style="display:inline-block;line-height:normal;vertical-align:baseline">TS</span></div>
<div style="position:absolute;left:102.5px;top:973.87px;font:normal normal 16px/16px 'Liberation Sans', sans-serif;color:#cccccc;white-space:pre;letter-spacing:0px;"><span style="display:inline-block;line-height:normal;vertical-align:baseline">references.d.ts</span></div>
<div style="position:absolute;left:80px;top:1000.5px;width:14px;height:14px;background:#519aba;border-radius:1.5px"></div>
<div style="position:absolute;left:83px;top:1005.46px;font:normal bold 9.6px/9.6px 'Liberation Sans', sans-serif;color:#14232b;white-space:pre;letter-spacing:-0.3px;"><span style="display:inline-block;line-height:normal;vertical-align:baseline">TS</span></div>
<div style="position:absolute;left:102.5px;top:1001.37px;font:normal normal 16px/16px 'Liberation Sans', sans-serif;color:#cccccc;white-space:pre;letter-spacing:0px;"><span style="display:inline-block;line-height:normal;vertical-align:baseline">tsconfig.json</span></div>
<svg style="position:absolute;left:79px;top:1027.55px;" width="16" height="16" viewBox="0 0 16 16" fill="none"><path d="M8 0.6 14.4 4.3V11.7L8 15.4 1.6 11.7V4.3Z" fill="#519aba"/><path d="M8 3.8 11.6 5.9V10.1L8 12.2 4.4 10.1V5.9Z M4.4 5.9 8 8 11.6 5.9 M8 8V12.2 M8 0.6V3.8 M8 12.2V15.4" stroke="#1d3642" stroke-width="0.9" fill="none"/></svg>
<div style="position:absolute;left:102.5px;top:1028.87px;font:normal normal 16px/16px 'Liberation Sans', sans-serif;color:#cccccc;white-space:pre;letter-spacing:0px;"><span style="display:inline-block;line-height:normal;vertical-align:baseline">webpack.config.js</span></div>
<div style="position:absolute;left:60px;top:1298px;width:349px;height:1px;background:#2b2b2b;"></div>
<div style="position:absolute;left:60px;top:1325px;width:349px;height:1px;background:#2b2b2b;"></div>
<svg style="position:absolute;left:63px;top:1301.5px;" width="20" height="20" viewBox="0 0 20 20" fill="none"><path d="M7 3.6 13.2 10 7 16.4" stroke="#cccccc" stroke-width="1.35"/></svg>
<div style="position:absolute;left:85.4px;top:1305.03px;font:normal bold 13px/13px 'Liberation Sans', sans-serif;color:#cccccc;white-space:pre;letter-spacing:-0.15px;"><span style="display:inline-block;line-height:normal;vertical-align:baseline">OUTLINE</span></div>
<svg style="position:absolute;left:63px;top:1329px;" width="20" height="20" viewBox="0 0 20 20" fill="none"><path d="M7 3.6 13.2 10 7 16.4" stroke="#cccccc" stroke-width="1.35"/></svg>
<div style="position:absolute;left:85.4px;top:1332.73px;font:normal bold 13px/13px 'Liberation Sans', sans-serif;color:#cccccc;white-space:pre;letter-spacing:-0.15px;"><span style="display:inline-block;line-height:normal;vertical-align:baseline">TIMELINE</span></div>
<div style="position:absolute;left:410px;top:44px;width:1005px;height:1309px;background:#1f1f1f;"></div>
<div style="position:absolute;left:410px;top:44px;width:1005px;height:43px;background:#181818;"></div>
<div style="position:absolute;left:410px;top:86px;width:1005px;height:1px;background:#2b2b2b;"></div>
<div style="position:absolute;left:1416px;top:44px;width:1144px;height:1309px;background:#1f1f1f;"></div>
<div style="position:absolute;left:1416px;top:44px;width:1144px;height:43px;background:#181818;"></div>
<div style="position:absolute;left:1416px;top:86px;width:1144px;height:1px;background:#2b2b2b;"></div>
<div style="position:absolute;left:1415px;top:44px;width:1px;height:1309px;background:#2b2b2b;"></div>
<div style="position:absolute;left:621px;top:44px;width:1px;height:43px;background:#2b2b2b;"></div>
<div style="position:absolute;left:426.5px;top:58.42px;font:normal bold 12.8px/12.8px 'Liberation Sans', sans-serif;color:#519aba;white-space:pre;letter-spacing:-0.1px;"><span style="display:inline-block;line-height:normal;vertical-align:baseline">TS</span></div>
<div style="position:absolute;left:450px;top:57.52px;font:normal normal 16px/16px 'Liberation Sans', sans-serif;color:#e2c08d;white-space:pre;letter-spacing:0px;"><span style="display:inline-block;line-height:normal;vertical-align:baseline">install.module.ts</span></div>
<div style="position:absolute;left:573px;top:56.52px;font:normal bold 16px/16px 'Liberation Sans', sans-serif;color:#e2c08d;white-space:pre;letter-spacing:0px;opacity:0.78"><span style="display:inline-block;line-height:normal;vertical-align:baseline">M</span></div>
<div style="position:absolute;left:622px;top:44px;width:165px;height:43px;background:#1f1f1f;"></div>
<div style="position:absolute;left:786px;top:44px;width:1px;height:43px;background:#2b2b2b;"></div>
<svg style="position:absolute;left:637.5px;top:57.5px;" width="15" height="15" viewBox="0 0 15 15" fill="none"><path d="M5.2 1H4.4C3.4 1 2.9 1.6 2.9 2.6V5.9C2.9 6.8 2.4 7.3 1.2 7.5 2.4 7.7 2.9 8.2 2.9 9.1V12.4C2.9 13.4 3.4 14 4.4 14H5.2M9.8 1H10.6C11.6 1 12.1 1.6 12.1 2.6V5.9C12.1 6.8 12.6 7.3 13.8 7.5 12.6 7.7 12.1 8.2 12.1 9.1V12.4C12.1 13.4 11.6 14 10.6 14H9.8" stroke="#cbcb41" stroke-width="1.9"/></svg>
<div style="position:absolute;left:661.8px;top:57.52px;font:italic normal 16px/16px 'Liberation Sans', sans-serif;color:#9d9d9d;white-space:pre;letter-spacing:-0.45px;"><span style="display:inline-block;line-height:normal;vertical-align:baseline">package.json</span></div>
<svg style="position:absolute;left:760px;top:58px;" width="16" height="16" viewBox="0 0 16 16" fill="none"><path d="M2.5 2.8 13.8 14.1M13.8 2.8 2.5 14.1" stroke="#9d9d9d" stroke-width="1.25"/></svg>
<div style="position:absolute;left:936px;top:44px;width:1px;height:43px;background:#2b2b2b;"></div>
<div style="position:absolute;left:803.0px;top:58.42px;font:normal bold 12.8px/12.8px 'Liberation Sans', sans-serif;color:#519aba;white-space:pre;letter-spacing:-0.1px;"><span style="display:inline-block;line-height:normal;vertical-align:baseline">TS</span></div>
<div style="position:absolute;left:827px;top:57.52px;font:normal normal 16px/16px 'Liberation Sans', sans-serif;color:#e2c08d;white-space:pre;letter-spacing:0px;"><span style="display:inline-block;line-height:normal;vertical-align:baseline">main.ts</span></div>
<div style="position:absolute;left:888px;top:56.52px;font:normal bold 16px/16px 'Liberation Sans', sans-serif;color:#e2c08d;white-space:pre;letter-spacing:0px;opacity:0.78"><span style="display:inline-block;line-height:normal;vertical-align:baseline">M</span></div>
<div style="position:absolute;left:1379.2px;top:64.8px;width:2.3px;height:2.3px;background:#cccccc;border-radius:1.15px"></div>
<div style="position:absolute;left:1386px;top:64.8px;width:2.3px;height:2.3px;background:#cccccc;border-radius:1.15px"></div>
<div style="position:absolute;left:1392.8px;top:64.8px;width:2.3px;height:2.3px;background:#cccccc;border-radius:1.15px"></div>
<div style="position:absolute;left:1626px;top:44px;width:1px;height:43px;background:#2b2b2b;"></div>
<div style="position:absolute;left:1431.5px;top:58.42px;font:normal bold 12.8px/12.8px 'Liberation Sans', sans-serif;color:#519aba;white-space:pre;letter-spacing:-0.1px;"><span style="display:inline-block;line-height:normal;vertical-align:baseline">TS</span></div>
<div style="position:absolute;left:1455.3px;top:57.52px;font:normal normal 16px/16px 'Liberation Sans', sans-serif;color:#e2c08d;white-space:pre;letter-spacing:0px;"><span style="display:inline-block;line-height:normal;vertical-align:baseline">install.module.ts</span></div>
<div style="position:absolute;left:1577.5px;top:56.52px;font:normal bold 16px/16px 'Liberation Sans', sans-serif;color:#e2c08d;white-space:pre;letter-spacing:0px;opacity:0.78"><span style="display:inline-block;line-height:normal;vertical-align:baseline">M</span></div>
<div style="position:absolute;left:1823px;top:44px;width:1px;height:43px;background:#2b2b2b;"></div>
<div style="position:absolute;left:1643.5px;top:58.42px;font:normal bold 12.8px/12.8px 'Liberation Sans', sans-serif;color:#519aba;white-space:pre;letter-spacing:-0.1px;"><span style="display:inline-block;line-height:normal;vertical-align:baseline">TS</span></div>
<div style="position:absolute;left:1667px;top:57.52px;font:normal normal 16px/16px 'Liberation Sans', sans-serif;color:#e2c08d;white-space:pre;letter-spacing:0px;"><span style="display:inline-block;line-height:normal;vertical-align:baseline">app.module.ts</span></div>
<div style="position:absolute;left:1775px;top:56.52px;font:normal bold 16px/16px 'Liberation Sans', sans-serif;color:#e2c08d;white-space:pre;letter-spacing:0px;opacity:0.78"><span style="display:inline-block;line-height:normal;vertical-align:baseline">M</span></div>
<div style="position:absolute;left:1824px;top:44px;width:242px;height:43px;background:#1f1f1f;"></div>
<div style="position:absolute;left:1824px;top:44px;width:242px;height:1px;background:#0078d4;"></div>
<div style="position:absolute;left:1824px;top:45px;width:242px;height:1px;background:#0a4f82;"></div>
<div style="position:absolute;left:2065px;top:44px;width:1px;height:43px;background:#2b2b2b;"></div>
<div style="position:absolute;left:1823px;top:44px;width:1px;height:43px;background:#2b2b2b;"></div>
<div style="position:absolute;left:1840.0px;top:58.42px;font:normal bold 12.8px/12.8px 'Liberation Sans', sans-serif;color:#519aba;white-space:pre;letter-spacing:-0.1px;"><span style="display:inline-block;line-height:normal;vertical-align:baseline">TS</span></div>
<div style="position:absolute;left:1864.7px;top:57.52px;font:normal normal 16px/16px 'Liberation Sans', sans-serif;color:#e2c08d;white-space:pre;letter-spacing:0px;"><span style="display:inline-block;line-height:normal;vertical-align:baseline">nativescript.config.ts</span></div>
<div style="position:absolute;left:2017px;top:56.52px;font:normal bold 16px/16px 'Liberation Sans', sans-serif;color:#e2c08d;white-space:pre;letter-spacing:0px;opacity:0.78"><span style="display:inline-block;line-height:normal;vertical-align:baseline">M</span></div>
<svg style="position:absolute;left:2039px;top:58px;" width="17" height="17" viewBox="0 0 17 17" fill="none"><path d="M2.3 2.3 14.7 14.7M14.7 2.3 2.3 14.7" stroke="#ffffff" stroke-width="1.5"/></svg>
<svg style="position:absolute;left:2423px;top:58px;" width="22" height="15" viewBox="0 0 22 15" fill="none"><path d="M1.5 1V14M7 1V14M1.5 7.3H7M10.6 1V14M10.6 1H15M10.6 7.3H14.5M10.6 14H15M16.6 1 21 14M21 1 16.6 14" stroke="#cccccc" stroke-width="1.3"/></svg>
<svg style="position:absolute;left:2456px;top:56px;" width="21" height="21" viewBox="0 0 21 21" fill="none"><circle cx="4.2" cy="3.8" r="2.4" stroke="#cccccc" stroke-width="1.3"/><circle cx="16" cy="16.8" r="2.4" stroke="#cccccc" stroke-width="1.3"/><path d="M4.2 6.2V13.4Q4.2 15.6 6.4 15.6H11.8M9.6 13.3 11.9 15.6 9.6 17.9M16 14.4V7.4Q16 5.2 13.8 5.2H8.6M10.8 2.9 8.5 5.2 10.8 7.5" stroke="#cccccc" stroke-width="1.3"/></svg>
<svg style="position:absolute;left:2490px;top:56px;" width="19" height="19" viewBox="0 0 19 19" fill="none"><rect x="1.3" y="1.4" width="16.4" height="16" rx="1.4" stroke="#cccccc" stroke-width="1.3"/><path d="M9.5 1.4V17.4" stroke="#cccccc" stroke-width="1.3"/></svg>
<div style="position:absolute;left:2524.2px;top:64.8px;width:2.3px;height:2.3px;background:#cccccc;border-radius:1.3px"></div>
<div style="position:absolute;left:2531px;top:64.8px;width:2.3px;height:2.3px;background:#cccccc;border-radius:1.3px"></div>
<div style="position:absolute;left:2537.8px;top:64.8px;width:2.3px;height:2.3px;background:#cccccc;border-radius:1.3px"></div>
<svg style="position:absolute;left:434.5px;top:93.0px;" width="15" height="15" viewBox="0 0 15 15" fill="none"><path d="M5.2 1H4.4C3.4 1 2.9 1.6 2.9 2.6V5.9C2.9 6.8 2.4 7.3 1.2 7.5 2.4 7.7 2.9 8.2 2.9 9.1V12.4C2.9 13.4 3.4 14 4.4 14H5.2M9.8 1H10.6C11.6 1 12.1 1.6 12.1 2.6V5.9C12.1 6.8 12.6 7.3 13.8 7.5 12.6 7.7 12.1 8.2 12.1 9.1V12.4C12.1 13.4 11.6 14 10.6 14H9.8" stroke="#cbcb41" stroke-width="1.9"/></svg>
<div style="position:absolute;left:457.8px;top:94.22px;font:normal normal 16px/16px 'Liberation Sans', sans-serif;color:#a9a9a9;white-space:pre;letter-spacing:0px;"><span style="display:inline-block;line-height:normal;vertical-align:baseline">package.json</span></div>
<svg style="position:absolute;left:551px;top:91px;" width="20" height="20" viewBox="0 0 20 20" fill="none"><path d="M7.5 4 13.3 10 7.5 16" stroke="#a9a9a9" stroke-width="1.3"/></svg>
<svg style="position:absolute;left:572px;top:93.5px;" width="16" height="17" viewBox="0 0 16 17" fill="none"><path d="M4.6 1.2H3.9C2.9 1.2 2.4 1.8 2.4 2.8V6.4C2.4 7.5 1.9 8.1 0.9 8.5 1.9 8.9 2.4 9.5 2.4 10.6V14.2C2.4 15.2 2.9 15.8 3.9 15.8H4.6M11.4 1.2H12.1C13.1 1.2 13.6 1.8 13.6 2.8V6.4C13.6 7.5 14.1 8.1 15.1 8.5 14.1 8.9 13.6 9.5 13.6 10.6V14.2C13.6 15.2 13.1 15.8 12.1 15.8H11.4" stroke="#b8b8b8" stroke-width="1.3"/></svg>
<div style="position:absolute;left:594.4px;top:94.22px;font:normal normal 16px/16px 'Liberation Sans', sans-serif;color:#a9a9a9;white-space:pre;letter-spacing:0px;"><span style="display:inline-block;line-height:normal;vertical-align:baseline">dependencies</span></div>
<div style="position:absolute;left:1439.5px;top:93.92px;font:normal bold 12.8px/12.8px 'Liberation Sans', sans-serif;color:#519aba;white-space:pre;letter-spacing:-0.1px;"><span style="display:inline-block;line-height:normal;vertical-align:baseline">TS</span></div>
<div style="position:absolute;left:1462.8px;top:94.22px;font:normal normal 16px/16px 'Liberation Sans', sans-serif;color:#a9a9a9;white-space:pre;letter-spacing:0px;"><span style="display:inline-block;line-height:normal;vertical-align:baseline">nativescript.config.ts</span></div>
<svg style="position:absolute;left:1609.5px;top:91px;" width="20" height="20" viewBox="0 0 20 20" fill="none"><path d="M7.5 4 13.3 10 7.5 16" stroke="#a9a9a9" stroke-width="1.3"/></svg>
<svg style="position:absolute;left:1629px;top:95px;" width="20" height="13" viewBox="0 0 20 13" fill="none"><path d="M3.8 1H1.8V12H3.8M16.2 1H18.2V12H16.2" stroke="#75beff" stroke-width="1.5"/><path d="M5.4 5.6 10.6 3 14.6 5V8L9.4 10.6 5.4 8.6Z M5.4 5.6 9.4 7.6 14.6 5 M9.4 7.6V10.6" stroke="#75beff" stroke-width="1.3" stroke-linejoin="round"/></svg>
<div style="position:absolute;left:1653.3px;top:94.22px;font:normal normal 16px/16px 'Liberation Sans', sans-serif;color:#a9a9a9;white-space:pre;letter-spacing:0px;"><span style="display:inline-block;line-height:normal;vertical-align:baseline">default</span></div>
<div style="position:absolute;left:496px;top:305.25px;width:918px;height:2px;background:#282828;"></div>
<div style="position:absolute;left:496px;top:327.0px;width:918px;height:2px;background:#282828;"></div>
<div style="position:absolute;left:1412px;top:305.25px;width:2px;height:23.75px;background:#282828;"></div>
<div style="position:absolute;left:496px;top:139.0px;width:1px;height:736.25px;background:#404040;"></div>
<div style="position:absolute;left:515px;top:257.75px;width:1px;height:332.5px;background:#707070;"></div>
<div style="position:absolute;left:515px;top:637.75px;width:1px;height:190.0px;background:#404040;"></div>
<div style="position:absolute;left:402.5px;top:118.05px;width:60px;text-align:right;font:16px/23.75px 'Liberation Mono', monospace;color:#6e7681;white-space:pre">1</div>
<div style="position:absolute;left:495.5px;top:116.95px;font:17px/23.75px 'Liberation Mono', monospace;letter-spacing:-0.6px;white-space:pre"><span style="color:#ffd700">{</span></div>
<div style="position:absolute;left:402.5px;top:141.80px;width:60px;text-align:right;font:16px/23.75px 'Liberation Mono', monospace;color:#6e7681;white-space:pre">2</div>
<div style="position:absolute;left:495.5px;top:140.70px;font:17px/23.75px 'Liberation Mono', monospace;letter-spacing:-0.6px;white-space:pre"><span style="color:#cccccc">  </span><span style="color:#9cdcfe">&quot;name&quot;</span><span style="color:#cccccc">: </span><span style="color:#ce9178">&quot;draverdemo&quot;</span><span style="color:#cccccc">,</span></div>
<div style="position:absolute;left:402.5px;top:165.55px;width:60px;text-align:right;font:16px/23.75px 'Liberation Mono', monospace;color:#6e7681;white-space:pre">3</div>
<div style="position:absolute;left:495.5px;top:164.45px;font:17px/23.75px 'Liberation Mono', monospace;letter-spacing:-0.6px;white-space:pre"><span style="color:#cccccc">  </span><span style="color:#9cdcfe">&quot;main&quot;</span><span style="color:#cccccc">: </span><span style="color:#ce9178">&quot;./src/main.ts&quot;</span><span style="color:#cccccc">,</span></div>
<div style="position:absolute;left:402.5px;top:189.30px;width:60px;text-align:right;font:16px/23.75px 'Liberation Mono', monospace;color:#6e7681;white-space:pre">4</div>
<div style="position:absolute;left:495.5px;top:188.20px;font:17px/23.75px 'Liberation Mono', monospace;letter-spacing:-0.6px;white-space:pre"><span style="color:#cccccc">  </span><span style="color:#9cdcfe">&quot;version&quot;</span><span style="color:#cccccc">: </span><span style="color:#ce9178">&quot;1.0.0&quot;</span><span style="color:#cccccc">,</span></div>
<div style="position:absolute;left:402.5px;top:213.05px;width:60px;text-align:right;font:16px/23.75px 'Liberation Mono', monospace;color:#6e7681;white-space:pre">5</div>
<div style="position:absolute;left:495.5px;top:211.95px;font:17px/23.75px 'Liberation Mono', monospace;letter-spacing:-0.6px;white-space:pre"><span style="color:#cccccc">  </span><span style="color:#9cdcfe">&quot;private&quot;</span><span style="color:#cccccc">: </span><span style="color:#569cd6">true</span><span style="color:#cccccc">,</span></div>
<div style="position:absolute;left:402.5px;top:236.80px;width:60px;text-align:right;font:16px/23.75px 'Liberation Mono', monospace;color:#6e7681;white-space:pre">6</div>
<div style="position:absolute;left:495.5px;top:235.70px;font:17px/23.75px 'Liberation Mono', monospace;letter-spacing:-0.6px;white-space:pre"><span style="color:#cccccc">  </span><span style="color:#9cdcfe">&quot;dependencies&quot;</span><span style="color:#cccccc">: </span><span style="color:#da70d6">{</span></div>
<div style="position:absolute;left:402.5px;top:260.55px;width:60px;text-align:right;font:16px/23.75px 'Liberation Mono', monospace;color:#6e7681;white-space:pre">7</div>
<div style="position:absolute;left:495.5px;top:259.45px;font:17px/23.75px 'Liberation Mono', monospace;letter-spacing:-0.6px;white-space:pre"><span style="color:#cccccc">    </span><span style="color:#9cdcfe">&quot;@angular/animations&quot;</span><span style="color:#cccccc">: </span><span style="color:#ce9178">&quot;~16.2.0&quot;</span><span style="color:#cccccc">,</span></div>
<div style="position:absolute;left:402.5px;top:284.30px;width:60px;text-align:right;font:16px/23.75px 'Liberation Mono', monospace;color:#6e7681;white-space:pre">8</div>
<div style="position:absolute;left:495.5px;top:283.20px;font:17px/23.75px 'Liberation Mono', monospace;letter-spacing:-0.6px;white-space:pre"><span style="color:#cccccc">    </span><span style="color:#9cdcfe">&quot;@angular/common&quot;</span><span style="color:#cccccc">: </span><span style="color:#ce9178">&quot;~16.2.0&quot;</span><span style="color:#cccccc">,</span></div>
<div style="position:absolute;left:402.5px;top:308.05px;width:60px;text-align:right;font:16px/23.75px 'Liberation Mono', monospace;color:#cccccc;white-space:pre">9</div>
<div style="position:absolute;left:495.5px;top:306.95px;font:17px/23.75px 'Liberation Mono', monospace;letter-spacing:-0.6px;white-space:pre"><span style="color:#cccccc">    </span><span style="color:#9cdcfe">&quot;@angular/compiler&quot;</span><span style="color:#cccccc">: </span><span style="color:#ce9178">&quot;~16.2.0&quot;</span><span style="color:#cccccc">,</span></div>
<div style="position:absolute;left:402.5px;top:331.80px;width:60px;text-align:right;font:16px/23.75px 'Liberation Mono', monospace;color:#6e7681;white-space:pre">10</div>
<div style="position:absolute;left:495.5px;top:330.70px;font:17px/23.75px 'Liberation Mono', monospace;letter-spacing:-0.6px;white-space:pre"><span style="color:#cccccc">    </span><span style="color:#9cdcfe">&quot;@angular/core&quot;</span><span style="color:#cccccc">: </span><span style="color:#ce9178">&quot;~16.2.0&quot;</span><span style="color:#cccccc">,</span></div>
<div style="position:absolute;left:402.5px;top:355.55px;width:60px;text-align:right;font:16px/23.75px 'Liberation Mono', monospace;color:#6e7681;white-space:pre">11</div>
<div style="position:absolute;left:495.5px;top:354.45px;font:17px/23.75px 'Liberation Mono', monospace;letter-spacing:-0.6px;white-space:pre"><span style="color:#cccccc">    </span><span style="color:#9cdcfe">&quot;@angular/forms&quot;</span><span style="color:#cccccc">: </span><span style="color:#ce9178">&quot;~16.2.0&quot;</span><span style="color:#cccccc">,</span></div>
<div style="position:absolute;left:402.5px;top:379.30px;width:60px;text-align:right;font:16px/23.75px 'Liberation Mono', monospace;color:#6e7681;white-space:pre">12</div>
<div style="position:absolute;left:495.5px;top:378.20px;font:17px/23.75px 'Liberation Mono', monospace;letter-spacing:-0.6px;white-space:pre"><span style="color:#cccccc">    </span><span style="color:#9cdcfe">&quot;@angular/platform-browser&quot;</span><span style="color:#cccccc">: </span><span style="color:#ce9178">&quot;~16.2.0&quot;</span><span style="color:#cccccc">,</span></div>
<div style="position:absolute;left:402.5px;top:403.05px;width:60px;text-align:right;font:16px/23.75px 'Liberation Mono', monospace;color:#6e7681;white-space:pre">13</div>
<div style="position:absolute;left:495.5px;top:401.95px;font:17px/23.75px 'Liberation Mono', monospace;letter-spacing:-0.6px;white-space:pre"><span style="color:#cccccc">    </span><span style="color:#9cdcfe">&quot;@angular/platform-browser-dynamic&quot;</span><span style="color:#cccccc">: </span><span style="color:#ce9178">&quot;~16.2.0&quot;</span><span style="color:#cccccc">,</span></div>
<div style="position:absolute;left:402.5px;top:426.80px;width:60px;text-align:right;font:16px/23.75px 'Liberation Mono', monospace;color:#6e7681;white-space:pre">14</div>
<div style="position:absolute;left:495.5px;top:425.70px;font:17px/23.75px 'Liberation Mono', monospace;letter-spacing:-0.6px;white-space:pre"><span style="color:#cccccc">    </span><span style="color:#9cdcfe">&quot;@angular/router&quot;</span><span style="color:#cccccc">: </span><span style="color:#ce9178">&quot;~16.2.0&quot;</span><span style="color:#cccccc">,</span></div>
<div style="position:absolute;left:402.5px;top:450.55px;width:60px;text-align:right;font:16px/23.75px 'Liberation Mono', monospace;color:#6e7681;white-space:pre">15</div>
<div style="position:absolute;left:495.5px;top:449.45px;font:17px/23.75px 'Liberation Mono', monospace;letter-spacing:-0.6px;white-space:pre"><span style="color:#cccccc">    </span><span style="color:#9cdcfe">&quot;@nativescript-community/ui-drawer&quot;</span><span style="color:#cccccc">: </span><span style="color:#ce9178">&quot;^0.1.27&quot;</span><span style="color:#cccccc">,</span></div>
<div style="position:absolute;left:402.5px;top:474.30px;width:60px;text-align:right;font:16px/23.75px 'Liberation Mono', monospace;color:#6e7681;white-space:pre">16</div>
<div style="position:absolute;left:495.5px;top:473.20px;font:17px/23.75px 'Liberation Mono', monospace;letter-spacing:-0.6px;white-space:pre"><span style="color:#cccccc">    </span><span style="color:#9cdcfe">&quot;@nativescript/angular&quot;</span><span style="color:#cccccc">: </span><span style="color:#ce9178">&quot;^16.0.0&quot;</span><span style="color:#cccccc">,</span></div>
<div style="position:absolute;left:402.5px;top:498.05px;width:60px;text-align:right;font:16px/23.75px 'Liberation Mono', monospace;color:#6e7681;white-space:pre">17</div>
<div style="position:absolute;left:495.5px;top:496.95px;font:17px/23.75px 'Liberation Mono', monospace;letter-spacing:-0.6px;white-space:pre"><span style="color:#cccccc">    </span><span style="color:#9cdcfe">&quot;@nativescript/core&quot;</span><span style="color:#cccccc">: </span><span style="color:#ce9178">&quot;~8.6.0&quot;</span><span style="color:#cccccc">,</span></div>
<div style="position:absolute;left:402.5px;top:521.80px;width:60px;text-align:right;font:16px/23.75px 'Liberation Mono', monospace;color:#6e7681;white-space:pre">18</div>
<div style="position:absolute;left:495.5px;top:520.70px;font:17px/23.75px 'Liberation Mono', monospace;letter-spacing:-0.6px;white-space:pre"><span style="color:#cccccc">    </span><span style="color:#9cdcfe">&quot;@nativescript/theme&quot;</span><span style="color:#cccccc">: </span><span style="color:#ce9178">&quot;~3.0.2&quot;</span><span style="color:#cccccc">,</span></div>
<div style="position:absolute;left:402.5px;top:545.55px;width:60px;text-align:right;font:16px/23.75px 'Liberation Mono', monospace;color:#6e7681;white-space:pre">19</div>
<div style="position:absolute;left:495.5px;top:544.45px;font:17px/23.75px 'Liberation Mono', monospace;letter-spacing:-0.6px;white-space:pre"><span style="color:#cccccc">    </span><span style="color:#9cdcfe">&quot;rxjs&quot;</span><span style="color:#cccccc">: </span><span style="color:#ce9178">&quot;~7.8.0&quot;</span><span style="color:#cccccc">,</span></div>
<div style="position:absolute;left:402.5px;top:569.30px;width:60px;text-align:right;font:16px/23.75px 'Liberation Mono', monospace;color:#6e7681;white-space:pre">20</div>
<div style="position:absolute;left:495.5px;top:568.20px;font:17px/23.75px 'Liberation Mono', monospace;letter-spacing:-0.6px;white-space:pre"><span style="color:#cccccc">    </span><span style="color:#9cdcfe">&quot;zone.js&quot;</span><span style="color:#cccccc">: </span><span style="color:#ce9178">&quot;~0.13.0&quot;</span></div>
<div style="position:absolute;left:402.5px;top:593.05px;width:60px;text-align:right;font:16px/23.75px 'Liberation Mono', monospace;color:#6e7681;white-space:pre">21</div>
<div style="position:absolute;left:495.5px;top:591.95px;font:17px/23.75px 'Liberation Mono', monospace;letter-spacing:-0.6px;white-space:pre"><span style="color:#cccccc">  </span><span style="color:#da70d6">}</span><span style="color:#cccccc">,</span></div>
<div style="position:absolute;left:402.5px;top:616.80px;width:60px;text-align:right;font:16px/23.75px 'Liberation Mono', monospace;color:#6e7681;white-space:pre">22</div>
<div style="position:absolute;left:495.5px;top:615.70px;font:17px/23.75px 'Liberation Mono', monospace;letter-spacing:-0.6px;white-space:pre"><span style="color:#cccccc">  </span><span style="color:#9cdcfe">&quot;devDependencies&quot;</span><span style="color:#cccccc">: </span><span style="color:#da70d6">{</span></div>
<div style="position:absolute;left:402.5px;top:640.55px;width:60px;text-align:right;font:16px/23.75px 'Liberation Mono', monospace;color:#6e7681;white-space:pre">23</div>
<div style="position:absolute;left:495.5px;top:639.45px;font:17px/23.75px 'Liberation Mono', monospace;letter-spacing:-0.6px;white-space:pre"><span style="color:#cccccc">    </span><span style="color:#9cdcfe">&quot;@angular-devkit/build-angular&quot;</span><span style="color:#cccccc">: </span><span style="color:#ce9178">&quot;~16.2.0&quot;</span><span style="color:#cccccc">,</span></div>
<div style="position:absolute;left:402.5px;top:664.30px;width:60px;text-align:right;font:16px/23.75px 'Liberation Mono', monospace;color:#6e7681;white-space:pre">24</div>
<div style="position:absolute;left:495.5px;top:663.20px;font:17px/23.75px 'Liberation Mono', monospace;letter-spacing:-0.6px;white-space:pre"><span style="color:#cccccc">    </span><span style="color:#9cdcfe">&quot;@angular/compiler-cli&quot;</span><span style="color:#cccccc">: </span><span style="color:#ce9178">&quot;~16.2.0&quot;</span><span style="color:#cccccc">,</span></div>
<div style="position:absolute;left:402.5px;top:688.05px;width:60px;text-align:right;font:16px/23.75px 'Liberation Mono', monospace;color:#6e7681;white-space:pre">25</div>
<div style="position:absolute;left:495.5px;top:686.95px;font:17px/23.75px 'Liberation Mono', monospace;letter-spacing:-0.6px;white-space:pre"><span style="color:#cccccc">    </span><span style="color:#9cdcfe">&quot;@nativescript/android&quot;</span><span style="color:#cccccc">: </span><span style="color:#ce9178">&quot;8.6.2&quot;</span><span style="color:#cccccc">,</span></div>
<div style="position:absolute;left:402.5px;top:711.80px;width:60px;text-align:right;font:16px/23.75px 'Liberation Mono', monospace;color:#6e7681;white-space:pre">26</div>
<div style="position:absolute;left:495.5px;top:710.70px;font:17px/23.75px 'Liberation Mono', monospace;letter-spacing:-0.6px;white-space:pre"><span style="color:#cccccc">    </span><span style="color:#9cdcfe">&quot;@nativescript/preview-cli&quot;</span><span style="color:#cccccc">: </span><span style="color:#ce9178">&quot;1.0.12&quot;</span><span style="color:#cccccc">,</span></div>
<div style="position:absolute;left:402.5px;top:735.55px;width:60px;text-align:right;font:16px/23.75px 'Liberation Mono', monospace;color:#6e7681;white-space:pre">27</div>
<div style="position:absolute;left:495.5px;top:734.45px;font:17px/23.75px 'Liberation Mono', monospace;letter-spacing:-0.6px;white-space:pre"><span style="color:#cccccc">    </span><span style="color:#9cdcfe">&quot;@nativescript/types&quot;</span><span style="color:#cccccc">: </span><span style="color:#ce9178">&quot;~8.6.0&quot;</span><span style="color:#cccccc">,</span></div>
<div style="position:absolute;left:402.5px;top:759.30px;width:60px;text-align:right;font:16px/23.75px 'Liberation Mono', monospace;color:#6e7681;white-space:pre">28</div>
<div style="position:absolute;left:495.5px;top:758.20px;font:17px/23.75px 'Liberation Mono', monospace;letter-spacing:-0.6px;white-space:pre"><span style="color:#cccccc">    </span><span style="color:#9cdcfe">&quot;@nativescript/webpack&quot;</span><span style="color:#cccccc">: </span><span style="color:#ce9178">&quot;~5.0.18&quot;</span><span style="color:#cccccc">,</span></div>
<div style="position:absolute;left:402.5px;top:783.05px;width:60px;text-align:right;font:16px/23.75px 'Liberation Mono', monospace;color:#6e7681;white-space:pre">29</div>
<div style="position:absolute;left:495.5px;top:781.95px;font:17px/23.75px 'Liberation Mono', monospace;letter-spacing:-0.6px;white-space:pre"><span style="color:#cccccc">    </span><span style="color:#9cdcfe">&quot;@ngtools/webpack&quot;</span><span style="color:#cccccc">: </span><span style="color:#ce9178">&quot;~16.2.0&quot;</span><span style="color:#cccccc">,</span></div>
<div style="position:absolute;left:402.5px;top:806.80px;width:60px;text-align:right;font:16px/23.75px 'Liberation Mono', monospace;color:#6e7681;white-space:pre">30</div>
<div style="position:absolute;left:495.5px;top:805.70px;font:17px/23.75px 'Liberation Mono', monospace;letter-spacing:-0.6px;white-space:pre"><span style="color:#cccccc">    </span><span style="color:#9cdcfe">&quot;typescript&quot;</span><span style="color:#cccccc">: </span><span style="color:#ce9178">&quot;~5.1.6&quot;</span></div>
<div style="position:absolute;left:402.5px;top:830.55px;width:60px;text-align:right;font:16px/23.75px 'Liberation Mono', monospace;color:#6e7681;white-space:pre">31</div>
<div style="position:absolute;left:495.5px;top:829.45px;font:17px/23.75px 'Liberation Mono', monospace;letter-spacing:-0.6px;white-space:pre"><span style="color:#cccccc">  </span><span style="color:#da70d6">}</span><span style="color:#cccccc">,</span></div>
<div style="position:absolute;left:402.5px;top:854.30px;width:60px;text-align:right;font:16px/23.75px 'Liberation Mono', monospace;color:#6e7681;white-space:pre">32</div>
<div style="position:absolute;left:495.5px;top:853.20px;font:17px/23.75px 'Liberation Mono', monospace;letter-spacing:-0.6px;white-space:pre"><span style="color:#cccccc">  </span><span style="color:#9cdcfe">&quot;readme&quot;</span><span style="color:#cccccc">: </span><span style="color:#ce9178">&quot;MyVault&quot;</span></div>
<div style="position:absolute;left:402.5px;top:878.05px;width:60px;text-align:right;font:16px/23.75px 'Liberation Mono', monospace;color:#6e7681;white-space:pre">33</div>
<div style="position:absolute;left:495.5px;top:876.95px;font:17px/23.75px 'Liberation Mono', monospace;letter-spacing:-0.6px;white-space:pre"><span style="color:#ffd700">}</span></div>
<div style="position:absolute;left:402.5px;top:901.80px;width:60px;text-align:right;font:16px/23.75px 'Liberation Mono', monospace;color:#6e7681;white-space:pre">34</div>
<div style="position:absolute;left:1500px;top:352.75px;width:1058px;height:2px;background:#282828;"></div>
<div style="position:absolute;left:1500px;top:374.5px;width:1058px;height:2px;background:#282828;"></div>
<div style="position:absolute;left:2556px;top:352.75px;width:2px;height:23.75px;background:#282828;"></div>
<div style="position:absolute;left:1500px;top:186.5px;width:1px;height:166.25px;background:#707070;"></div>
<div style="position:absolute;left:1519px;top:281.5px;width:1px;height:47.5px;background:#404040;"></div>
<div style="position:absolute;left:1407.5px;top:118.05px;width:60px;text-align:right;font:16px/23.75px 'Liberation Mono', monospace;color:#6e7681;white-space:pre">1</div>
<div style="position:absolute;left:1500px;top:116.95px;font:17px/23.75px 'Liberation Mono', monospace;letter-spacing:-0.6px;white-space:pre"><span style="color:#c586c0">import</span><span style="color:#cccccc"> </span><span style="color:#ffd700">{</span><span style="color:#9cdcfe"> NativeScriptConfig </span><span style="color:#ffd700">}</span><span style="color:#cccccc"> </span><span style="color:#c586c0">from</span><span style="color:#cccccc"> </span><span style="color:#ce9178">&#x27;@nativescript/core&#x27;</span><span style="color:#cccccc">;</span></div>
<div style="position:absolute;left:1407.5px;top:141.80px;width:60px;text-align:right;font:16px/23.75px 'Liberation Mono', monospace;color:#6e7681;white-space:pre">2</div>
<div style="position:absolute;left:1407.5px;top:165.55px;width:60px;text-align:right;font:16px/23.75px 'Liberation Mono', monospace;color:#6e7681;white-space:pre">3</div>
<div style="position:absolute;left:1500px;top:164.45px;font:17px/23.75px 'Liberation Mono', monospace;letter-spacing:-0.6px;white-space:pre"><span style="color:#c586c0">export</span><span style="color:#cccccc"> </span><span style="color:#c586c0">default</span><span style="color:#cccccc"> </span><span style="color:#ffd700">{</span></div>
<div style="position:absolute;left:1407.5px;top:189.30px;width:60px;text-align:right;font:16px/23.75px 'Liberation Mono', monospace;color:#6e7681;white-space:pre">4</div>
<div style="position:absolute;left:1500px;top:188.20px;font:17px/23.75px 'Liberation Mono', monospace;letter-spacing:-0.6px;white-space:pre"><span style="color:#9cdcfe">  id</span><span style="color:#cccccc">: </span><span style="color:#ce9178">&#x27;org.nativescript.DrawrDemo&#x27;</span><span style="color:#cccccc">,</span></div>
<div style="position:absolute;left:1407.5px;top:213.05px;width:60px;text-align:right;font:16px/23.75px 'Liberation Mono', monospace;color:#6e7681;white-space:pre">5</div>
<div style="position:absolute;left:1500px;top:211.95px;font:17px/23.75px 'Liberation Mono', monospace;letter-spacing:-0.6px;white-space:pre"><span style="color:#9cdcfe">  appPath</span><span style="color:#cccccc">: </span><span style="color:#ce9178">&#x27;src&#x27;</span><span style="color:#cccccc">,</span></div>
<div style="position:absolute;left:1407.5px;top:236.80px;width:60px;text-align:right;font:16px/23.75px 'Liberation Mono', monospace;color:#6e7681;white-space:pre">6</div>
<div style="position:absolute;left:1500px;top:235.70px;font:17px/23.75px 'Liberation Mono', monospace;letter-spacing:-0.6px;white-space:pre"><span style="color:#9cdcfe">  appResourcesPath</span><span style="color:#cccccc">: </span><span style="color:#ce9178">&#x27;App_Resources&#x27;</span><span style="color:#cccccc">,</span></div>
<div style="position:absolute;left:1407.5px;top:260.55px;width:60px;text-align:right;font:16px/23.75px 'Liberation Mono', monospace;color:#6e7681;white-space:pre">7</div>
<div style="position:absolute;left:1500px;top:259.45px;font:17px/23.75px 'Liberation Mono', monospace;letter-spacing:-0.6px;white-space:pre"><span style="color:#9cdcfe">  android</span><span style="color:#cccccc">: </span><span style="color:#da70d6">{</span></div>
<div style="position:absolute;left:1407.5px;top:284.30px;width:60px;text-align:right;font:16px/23.75px 'Liberation Mono', monospace;color:#6e7681;white-space:pre">8</div>
<div style="position:absolute;left:1500px;top:283.20px;font:17px/23.75px 'Liberation Mono', monospace;letter-spacing:-0.6px;white-space:pre"><span style="color:#9cdcfe">    v8Flags</span><span style="color:#cccccc">: </span><span style="color:#ce9178">&#x27;--expose_gc&#x27;</span><span style="color:#cccccc">,</span></div>
<div style="position:absolute;left:1407.5px;top:308.05px;width:60px;text-align:right;font:16px/23.75px 'Liberation Mono', monospace;color:#6e7681;white-space:pre">9</div>
<div style="position:absolute;left:1500px;top:306.95px;font:17px/23.75px 'Liberation Mono', monospace;letter-spacing:-0.6px;white-space:pre"><span style="color:#9cdcfe">    markingMode</span><span style="color:#cccccc">: </span><span style="color:#ce9178">&#x27;none&#x27;</span></div>
<div style="position:absolute;left:1407.5px;top:331.80px;width:60px;text-align:right;font:16px/23.75px 'Liberation Mono', monospace;color:#6e7681;white-space:pre">10</div>
<div style="position:absolute;left:1500px;top:330.70px;font:17px/23.75px 'Liberation Mono', monospace;letter-spacing:-0.6px;white-space:pre"><span style="color:#cccccc">  </span><span style="color:#da70d6">}</span></div>
<div style="position:absolute;left:1407.5px;top:355.55px;width:60px;text-align:right;font:16px/23.75px 'Liberation Mono', monospace;color:#cccccc;white-space:pre">11</div>
<div style="position:absolute;left:1500px;top:354.45px;font:17px/23.75px 'Liberation Mono', monospace;letter-spacing:-0.6px;white-space:pre"><span style="color:#ffd700">}</span><span style="color:#cccccc"> </span><span style="color:#c586c0">as</span><span style="color:#cccccc"> </span><span style="color:#4ec9b0">NativeScriptConfig</span><span style="color:#cccccc">;</span></div>
<svg style="position:absolute;left:1474px;top:186px;" width="5" height="24" viewBox="0 0 5 24" fill="none"><defs><pattern id="st" width="5" height="4" patternUnits="userSpaceOnUse" patternTransform="rotate(-45)"><rect width="5" height="2" fill="#1b81cc"/></pattern></defs><rect width="4" height="24" rx="1" fill="url(#st)"/></svg>
<div style="position:absolute;left:1398px;top:115px;width:1px;height:1238px;background:#0b0b0b;"></div>
<div style="position:absolute;left:1399px;top:115px;width:16px;height:1px;background:#0b0b0b;"></div>
<div style="position:absolute;left:1399px;top:230px;width:16px;height:2px;background:#a0a0a0;"></div>
<div style="position:absolute;left:2543px;top:115px;width:17px;height:1038px;background:#434343;"></div>
<div style="position:absolute;left:2544px;top:174px;width:5px;height:20px;background:#2f6a99;"></div>
<div style="position:absolute;left:2544px;top:313px;width:16px;height:2px;background:#a6a6a6;"></div>
<div style="position:absolute;left:2543px;top:1153px;width:1px;height:200px;background:#0b0b0b;"></div>
<div style="position:absolute;left:1399px;top:305.25px;width:15px;height:2px;background:#282828;"></div>
<div style="position:absolute;left:1399px;top:327.0px;width:15px;height:2px;background:#282828;"></div>
<div style="position:absolute;left:1412px;top:305.25px;width:2px;height:23.75px;background:#282828;"></div>
<div style="position:absolute;left:2543px;top:352.75px;width:15px;height:2px;background:#3c3c3c;"></div>
<div style="position:absolute;left:2543px;top:374.5px;width:15px;height:2px;background:#3c3c3c;"></div>
<div style="position:absolute;left:2556px;top:352.75px;width:2px;height:23.75px;background:#3c3c3c;"></div>
<div style="position:absolute;left:1860px;top:788px;width:3px;height:1.6px;background:#f0f0f0;"></div>
<div style="position:absolute;left:1865px;top:788px;width:3px;height:1.6px;background:#f0f0f0;"></div>
<div style="position:absolute;left:1863px;top:789px;width:2px;height:18px;background:#f0f0f0;"></div>
<div style="position:absolute;left:1860px;top:806.4px;width:3px;height:1.6px;background:#f0f0f0;"></div>
<div style="position:absolute;left:1865px;top:806.4px;width:3px;height:1.6px;background:#f0f0f0;"></div>
<div style="position:absolute;left:0px;top:1353px;width:2560px;height:28px;background:#181818;"></div>
<div style="position:absolute;left:0px;top:1353px;width:2560px;height:1px;background:#2b2b2b;"></div>
<div style="position:absolute;left:0px;top:1354px;width:43px;height:26px;background:#0078d4;"></div>
<div style="position:absolute;left:43px;top:1379px;width:2517px;height:1px;background:#101010;"></div>
<div style="position:absolute;left:0px;top:1379px;width:43px;height:1px;background:#006cc0;"></div>
<div style="position:absolute;left:0px;top:1380px;width:2560px;height:1px;background:#c3bfba;"></div>
<svg style="position:absolute;left:13px;top:1356px;" width="17" height="18" viewBox="0 0 17 18" fill="none"><path d="M2.6 7.6 7.2 12.2 2.6 16.8M14.6 1.6 10 6.2 14.6 10.8" stroke="#ffffff" stroke-width="1.35"/></svg>
<svg style="position:absolute;left:50px;top:1358px;" width="18" height="18" viewBox="0 0 18 18" fill="none"><circle cx="4.2" cy="3.3" r="2" stroke="#cccccc" stroke-width="1.3"/><circle cx="4.2" cy="14.8" r="2" stroke="#cccccc" stroke-width="1.3"/><circle cx="13.8" cy="6.2" r="2" stroke="#cccccc" stroke-width="1.3"/><path d="M4.2 5.3V12.8M13.8 8.2C13.8 11 10.8 11.6 4.6 12.9" stroke="#cccccc" stroke-width="1.3"/></svg>
<div style="position:absolute;left:71.2px;top:1358.65px;font:normal normal 14.75px/14.75px 'Liberation Sans', sans-serif;color:#cccccc;white-space:pre;letter-spacing:0px;"><span style="display:inline-block;line-height:normal;vertical-align:baseline">master*</span></div>
<svg style="position:absolute;left:131px;top:1360px;" width="17" height="14" viewBox="0 0 19 17.5" fill="none"><path d="M6.4 13.2H4.6C2.6 13.2 1.2 11.8 1.2 10C1.2 8.2 2.6 6.8 4.4 6.8C4.8 4.2 6.8 2.4 9.4 2.4C12 2.4 14 4.2 14.4 6.8C16.2 6.8 17.6 8.2 17.6 10C17.6 11.8 16.2 13.2 14.4 13.2H12.4" stroke="#cccccc" stroke-width="1.3"/><path d="M9.4 17V8.4M6.6 11 9.4 8.2 12.2 11" stroke="#cccccc" stroke-width="1.3"/></svg>
<svg style="position:absolute;left:165px;top:1358px;" width="18" height="18" viewBox="0 0 18 18" fill="none"><circle cx="9" cy="9" r="7.6" stroke="#cccccc" stroke-width="1.3"/><path d="M6 6 12 12M12 6 6 12" stroke="#cccccc" stroke-width="1.3"/></svg>
<div style="position:absolute;left:187.2px;top:1358.65px;font:normal normal 14.75px/14.75px 'Liberation Sans', sans-serif;color:#cccccc;white-space:pre;letter-spacing:0px;"><span style="display:inline-block;line-height:normal;vertical-align:baseline">0</span></div>
<svg style="position:absolute;left:199.5px;top:1358px;" width="18" height="18" viewBox="0 0 18 18" fill="none"><path d="M9 1.6 16.6 15.8H1.4Z" stroke="#cccccc" stroke-width="1.3" stroke-linejoin="round"/><path d="M9 6.4V11.2M9 12.6V14" stroke="#cccccc" stroke-width="1.3"/></svg>
<div style="position:absolute;left:220.6px;top:1358.65px;font:normal normal 14.75px/14.75px 'Liberation Sans', sans-serif;color:#cccccc;white-space:pre;letter-spacing:0px;"><span style="display:inline-block;line-height:normal;vertical-align:baseline">0</span></div>
<svg style="position:absolute;left:249.5px;top:1358px;" width="18" height="18" viewBox="0 0 18 18" fill="none"><path d="M3.2 2.2C1 4.6 1 8.6 3.2 11M14.8 2.2C17 4.6 17 8.6 14.8 11M5.4 4.2C4.2 5.6 4.2 7.6 5.4 9M12.6 4.2C13.8 5.6 13.8 7.6 12.6 9" stroke="#cccccc" stroke-width="1.3"/><circle cx="9" cy="6.6" r="1.4" fill="#cccccc"/><path d="M9 8V10M5.4 17 9 8.4 12.6 17M6.8 13.4H11.2" stroke="#cccccc" stroke-width="1.3"/></svg>
<div style="position:absolute;left:270.7px;top:1358.65px;font:normal normal 14.75px/14.75px 'Liberation Sans', sans-serif;color:#cccccc;white-space:pre;letter-spacing:0px;"><span style="display:inline-block;line-height:normal;vertical-align:baseline">0</span></div>
<div style="position:absolute;left:298.8px;top:1358.65px;font:normal normal 14.75px/14.75px 'Liberation Sans', sans-serif;color:#cccccc;white-space:pre;letter-spacing:-0.03px;"><span style="display:inline-block;line-height:normal;vertical-align:baseline">Auto Attach: Always</span></div>
<div style="position:absolute;left:1954.5px;top:1358.65px;font:normal normal 14.75px/14.75px 'Liberation Sans', sans-serif;color:#cccccc;white-space:pre;letter-spacing:-0.1px;"><span style="display:inline-block;line-height:normal;vertical-align:baseline">Ln 11, Col 25</span></div>
<div style="position:absolute;left:2059.9px;top:1358.65px;font:normal normal 14.75px/14.75px 'Liberation Sans', sans-serif;color:#cccccc;white-space:pre;letter-spacing:-0.5px;"><span style="display:inline-block;line-height:normal;vertical-align:baseline">Spaces: 2</span></div>
<div style="position:absolute;left:2141px;top:1358.65px;font:normal normal 14.75px/14.75px 'Liberation Sans', sans-serif;color:#cccccc;white-space:pre;letter-spacing:0px;"><span style="display:inline-block;line-height:normal;vertical-align:baseline">UTF-8</span></div>
<div style="position:absolute;left:2200.3px;top:1358.65px;font:normal normal 14.75px/14.75px 'Liberation Sans', sans-serif;color:#cccccc;white-space:pre;letter-spacing:0px;"><span style="display:inline-block;line-height:normal;vertical-align:baseline">LF</span></div>
<svg style="position:absolute;left:2233px;top:1359px;" width="16" height="16" viewBox="0 0 16 16" fill="none"><path d="M4.4 1.2H3.8C3 1.2 2.5 1.7 2.5 2.6V5.8C2.5 6.8 2 7.4 1 7.8 2 8.2 2.5 8.8 2.5 9.8V13C2.5 13.9 3 14.4 3.8 14.4H4.4M11.6 1.2H12.2C13 1.2 13.5 1.7 13.5 2.6V5.8C13.5 6.8 14 7.4 15 7.8 14 8.2 13.5 8.8 13.5 9.8V13C13.5 13.9 13 14.4 12.2 14.4H11.6" stroke="#cccccc" stroke-width="1.25"/></svg>
<div style="position:absolute;left:2257.2px;top:1358.65px;font:normal normal 14.75px/14.75px 'Liberation Sans', sans-serif;color:#cccccc;white-space:pre;letter-spacing:-0.15px;"><span style="display:inline-block;line-height:normal;vertical-align:baseline">TypeScript</span></div>
<svg style="position:absolute;left:2343px;top:1358px;" width="18" height="18" viewBox="0 0 18 18" fill="none"><path d="M4.6 12.8C2 10.6 1.6 6.6 3.8 3.8 6 1 10.2 0.6 12.9 2.8 15.6 5 16 9 13.8 11.8 13.6 12.2 13.4 12.4 13.2 12.6M6.8 10.6C5.4 9.4 5.2 7.2 6.4 5.8 7.6 4.4 9.8 4.2 11.2 5.4 12.6 6.6 12.8 8.8 11.6 10.2" stroke="#cccccc" stroke-width="1.3"/><circle cx="9" cy="8" r="1.4" fill="#cccccc"/><path d="M9 10V17.4" stroke="#cccccc" stroke-width="2.2"/></svg>
<div style="position:absolute;left:2365px;top:1358.65px;font:normal normal 14.75px/14.75px 'Liberation Sans', sans-serif;color:#cccccc;white-space:pre;letter-spacing:-0.2px;"><span style="display:inline-block;line-height:normal;vertical-align:baseline">Go Live</span></div>
<svg style="position:absolute;left:2431px;top:1359px;" width="22" height="16" viewBox="0 0 22 16" fill="none"><path d="M2.8 7 6 12.5 15 1.3M8.8 7 12 12.5 21 1.3" stroke="#cccccc" stroke-width="1.3"/></svg>
<div style="position:absolute;left:2455.7px;top:1358.65px;font:normal normal 14.75px/14.75px 'Liberation Sans', sans-serif;color:#cccccc;white-space:pre;letter-spacing:0.05px;"><span style="display:inline-block;line-height:normal;vertical-align:baseline">Prettier</span></div>
<svg style="position:absolute;left:2523px;top:1357px;" width="20" height="20" viewBox="0 0 20 20" fill="none"><path d="M4.2 14.6V8.8C4.2 5.4 6.4 3.2 9.4 3.2C10 3.2 10.6 3.3 11.1 3.5M15 9.4V14.6H17V15.8H2.2V14.6H4.2M7.4 17.2C7.8 18.3 8.6 18.9 9.6 18.9 10.6 18.9 11.4 18.3 11.8 17.2" stroke="#cccccc" stroke-width="1.3"/><circle cx="15.2" cy="4.6" r="3.2" fill="#cccccc"/></svg>
</body></html>
